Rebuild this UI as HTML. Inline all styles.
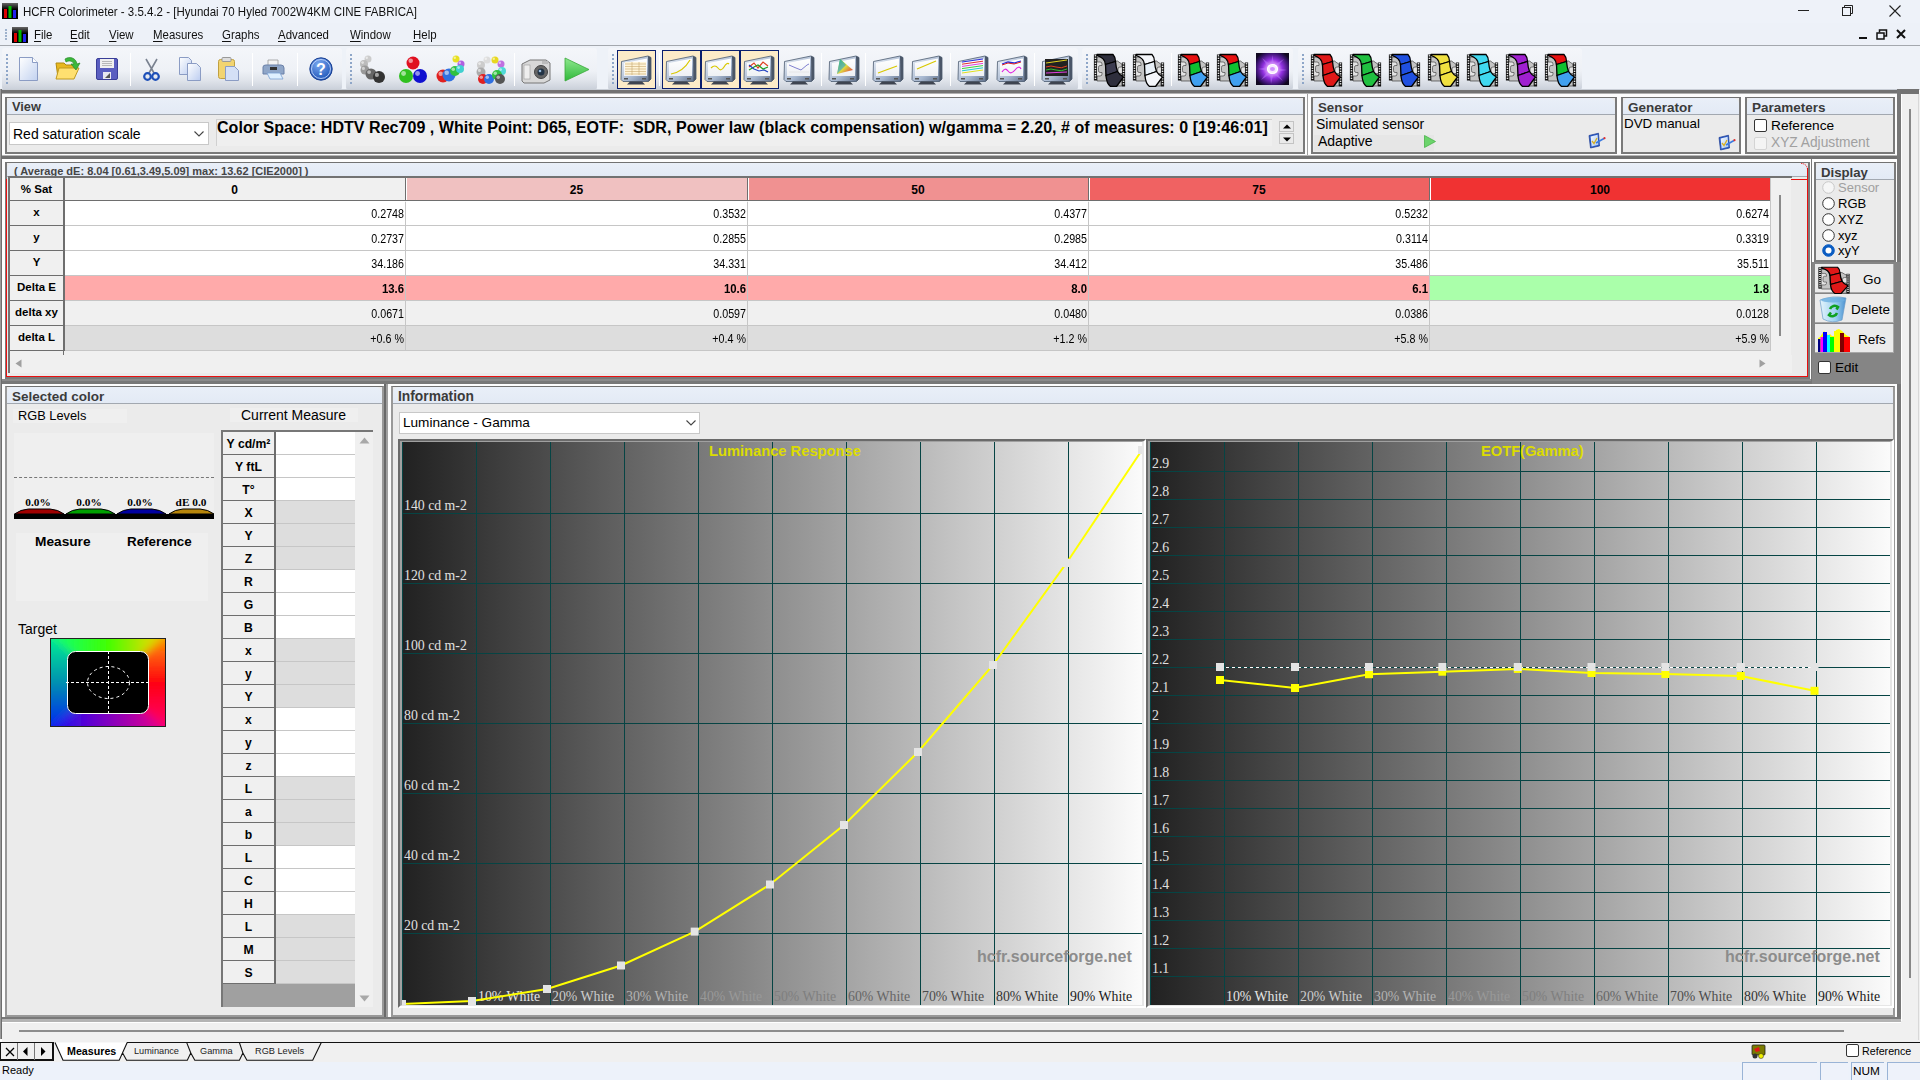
<!DOCTYPE html>
<html><head><meta charset="utf-8"><title>HCFR</title><style>
*{box-sizing:border-box;margin:0;padding:0}
html,body{width:1920px;height:1080px;overflow:hidden;background:#f0f0f0;font-family:"Liberation Sans",sans-serif;font-size:12px;color:#000}
.a{position:absolute}
.t{position:absolute;white-space:nowrap;line-height:1}
.b{font-weight:bold}
.serif{font-family:"Liberation Serif",serif}
.hdr{position:absolute;background:linear-gradient(#eef3fa,#e2e9f4);border-bottom:1px solid #a9b3bf}
.ptitle{position:absolute;font-weight:bold;font-size:12px;color:#3b3b3b;white-space:nowrap;line-height:1}
</style></head><body>
<div class="a" style="left:0;top:0;width:1920px;height:23px;background:#eef2f9"></div>
<svg class="a" style="left:2px;top:3px" width="16" height="16" viewBox="0 0 16 16"><defs><linearGradient id="aib" x1="0" y1="0" x2="0" y2="1"><stop offset="0" stop-color="#666"/><stop offset="0.4" stop-color="#000"/></linearGradient></defs><rect x="0" y="0" width="16" height="16" fill="url(#aib)"/><rect x="2" y="6" width="3" height="9" fill="#d00"/><rect x="6.5" y="3" width="3" height="12" fill="#0b0"/><rect x="11" y="7" width="3" height="8" fill="#22e"/></svg>
<div class="t" style="left:23px;top:5px;font-size:13px;transform:scaleX(0.885);transform-origin:0 0;color:#111">HCFR Colorimeter - 3.5.4.2 - [Hyundai 70 Hyled 7002W4KM CINE FABRICA]</div>
<div class="a" style="left:1798px;top:10px;width:11px;height:1px;background:#222"></div>
<svg class="a" style="left:1842px;top:5px" width="12" height="12"><rect x="0.5" y="2.5" width="8" height="8" fill="none" stroke="#222"/><path d="M2.5 2.5V0.5H10.5V8.5H8.5" fill="none" stroke="#222"/></svg>
<svg class="a" style="left:1889px;top:5px" width="12" height="12"><path d="M0.5 0.5L11.5 11.5M11.5 0.5L0.5 11.5" stroke="#222" stroke-width="1.1"/></svg>
<div class="a" style="left:0;top:23px;width:1920px;height:23px;background:#edf1f8;border-bottom:1px solid #a4a8ae"></div>
<div class="a" style="left:5px;top:29px;width:2px;height:2px;background:#9fb2cc"></div>
<div class="a" style="left:5px;top:32px;width:2px;height:2px;background:#9fb2cc"></div>
<div class="a" style="left:5px;top:35px;width:2px;height:2px;background:#9fb2cc"></div>
<div class="a" style="left:5px;top:38px;width:2px;height:2px;background:#9fb2cc"></div>
<svg class="a" style="left:12px;top:27px" width="16" height="16" viewBox="0 0 16 16"><defs><linearGradient id="aib" x1="0" y1="0" x2="0" y2="1"><stop offset="0" stop-color="#666"/><stop offset="0.4" stop-color="#000"/></linearGradient></defs><rect x="0" y="0" width="16" height="16" fill="url(#aib)"/><rect x="2" y="6" width="3" height="9" fill="#d00"/><rect x="6.5" y="3" width="3" height="12" fill="#0b0"/><rect x="11" y="7" width="3" height="8" fill="#22e"/></svg>
<div class="t" style="left:34px;top:28px;font-size:13px;transform:scaleX(0.88);transform-origin:0 0;color:#111"><u style="text-decoration-thickness:1px;text-underline-offset:2px">F</u>ile</div>
<div class="t" style="left:70px;top:28px;font-size:13px;transform:scaleX(0.88);transform-origin:0 0;color:#111"><u style="text-decoration-thickness:1px;text-underline-offset:2px">E</u>dit</div>
<div class="t" style="left:109px;top:28px;font-size:13px;transform:scaleX(0.88);transform-origin:0 0;color:#111"><u style="text-decoration-thickness:1px;text-underline-offset:2px">V</u>iew</div>
<div class="t" style="left:153px;top:28px;font-size:13px;transform:scaleX(0.88);transform-origin:0 0;color:#111"><u style="text-decoration-thickness:1px;text-underline-offset:2px">M</u>easures</div>
<div class="t" style="left:222px;top:28px;font-size:13px;transform:scaleX(0.88);transform-origin:0 0;color:#111"><u style="text-decoration-thickness:1px;text-underline-offset:2px">G</u>raphs</div>
<div class="t" style="left:278px;top:28px;font-size:13px;transform:scaleX(0.88);transform-origin:0 0;color:#111"><u style="text-decoration-thickness:1px;text-underline-offset:2px">A</u>dvanced</div>
<div class="t" style="left:350px;top:28px;font-size:13px;transform:scaleX(0.88);transform-origin:0 0;color:#111"><u style="text-decoration-thickness:1px;text-underline-offset:2px">W</u>indow</div>
<div class="t" style="left:413px;top:28px;font-size:13px;transform:scaleX(0.88);transform-origin:0 0;color:#111"><u style="text-decoration-thickness:1px;text-underline-offset:2px">H</u>elp</div>
<div class="a" style="left:1859px;top:37px;width:8px;height:2px;background:#111"></div>
<svg class="a" style="left:1876px;top:29px" width="12" height="11"><rect x="1" y="4" width="7" height="6" fill="none" stroke="#111" stroke-width="1.5"/><path d="M3.5 3.5V1H10.5V7H8" fill="none" stroke="#111" stroke-width="1.5"/></svg>
<svg class="a" style="left:1896px;top:29px" width="10" height="10"><path d="M1 1L9 9M9 1L1 9" stroke="#111" stroke-width="2"/></svg>
<div class="a" style="left:0;top:46px;width:1920px;height:44px;background:#eef2f8"></div>
<div class="a" style="left:2px;top:48px;width:340px;height:42px;border-radius:3px;background:linear-gradient(#f4f6fa 0%,#eef1f6 55%,#dfe3ea 78%,#c9cfd9 100%)"></div><div class="a" style="left:6px;top:54px;width:2px;height:2px;background:#8ea6c8"></div><div class="a" style="left:6px;top:58px;width:2px;height:2px;background:#8ea6c8"></div><div class="a" style="left:6px;top:62px;width:2px;height:2px;background:#8ea6c8"></div><div class="a" style="left:6px;top:66px;width:2px;height:2px;background:#8ea6c8"></div><div class="a" style="left:6px;top:70px;width:2px;height:2px;background:#8ea6c8"></div><div class="a" style="left:6px;top:74px;width:2px;height:2px;background:#8ea6c8"></div><div class="a" style="left:6px;top:78px;width:2px;height:2px;background:#8ea6c8"></div><div class="a" style="left:6px;top:82px;width:2px;height:2px;background:#8ea6c8"></div>
<div class="a" style="left:346px;top:48px;width:251px;height:42px;border-radius:3px;background:linear-gradient(#f4f6fa 0%,#eef1f6 55%,#dfe3ea 78%,#c9cfd9 100%)"></div><div class="a" style="left:350px;top:54px;width:2px;height:2px;background:#8ea6c8"></div><div class="a" style="left:350px;top:58px;width:2px;height:2px;background:#8ea6c8"></div><div class="a" style="left:350px;top:62px;width:2px;height:2px;background:#8ea6c8"></div><div class="a" style="left:350px;top:66px;width:2px;height:2px;background:#8ea6c8"></div><div class="a" style="left:350px;top:70px;width:2px;height:2px;background:#8ea6c8"></div><div class="a" style="left:350px;top:74px;width:2px;height:2px;background:#8ea6c8"></div><div class="a" style="left:350px;top:78px;width:2px;height:2px;background:#8ea6c8"></div><div class="a" style="left:350px;top:82px;width:2px;height:2px;background:#8ea6c8"></div>
<div class="a" style="left:608px;top:48px;width:470px;height:42px;border-radius:3px;background:linear-gradient(#f4f6fa 0%,#eef1f6 55%,#dfe3ea 78%,#c9cfd9 100%)"></div><div class="a" style="left:612px;top:54px;width:2px;height:2px;background:#8ea6c8"></div><div class="a" style="left:612px;top:58px;width:2px;height:2px;background:#8ea6c8"></div><div class="a" style="left:612px;top:62px;width:2px;height:2px;background:#8ea6c8"></div><div class="a" style="left:612px;top:66px;width:2px;height:2px;background:#8ea6c8"></div><div class="a" style="left:612px;top:70px;width:2px;height:2px;background:#8ea6c8"></div><div class="a" style="left:612px;top:74px;width:2px;height:2px;background:#8ea6c8"></div><div class="a" style="left:612px;top:78px;width:2px;height:2px;background:#8ea6c8"></div><div class="a" style="left:612px;top:82px;width:2px;height:2px;background:#8ea6c8"></div>
<div class="a" style="left:1082px;top:48px;width:211px;height:42px;border-radius:3px;background:linear-gradient(#f4f6fa 0%,#eef1f6 55%,#dfe3ea 78%,#c9cfd9 100%)"></div><div class="a" style="left:1086px;top:54px;width:2px;height:2px;background:#8ea6c8"></div><div class="a" style="left:1086px;top:58px;width:2px;height:2px;background:#8ea6c8"></div><div class="a" style="left:1086px;top:62px;width:2px;height:2px;background:#8ea6c8"></div><div class="a" style="left:1086px;top:66px;width:2px;height:2px;background:#8ea6c8"></div><div class="a" style="left:1086px;top:70px;width:2px;height:2px;background:#8ea6c8"></div><div class="a" style="left:1086px;top:74px;width:2px;height:2px;background:#8ea6c8"></div><div class="a" style="left:1086px;top:78px;width:2px;height:2px;background:#8ea6c8"></div><div class="a" style="left:1086px;top:82px;width:2px;height:2px;background:#8ea6c8"></div>
<div class="a" style="left:1298px;top:48px;width:284px;height:42px;border-radius:3px;background:linear-gradient(#f4f6fa 0%,#eef1f6 55%,#dfe3ea 78%,#c9cfd9 100%)"></div><div class="a" style="left:1302px;top:54px;width:2px;height:2px;background:#8ea6c8"></div><div class="a" style="left:1302px;top:58px;width:2px;height:2px;background:#8ea6c8"></div><div class="a" style="left:1302px;top:62px;width:2px;height:2px;background:#8ea6c8"></div><div class="a" style="left:1302px;top:66px;width:2px;height:2px;background:#8ea6c8"></div><div class="a" style="left:1302px;top:70px;width:2px;height:2px;background:#8ea6c8"></div><div class="a" style="left:1302px;top:74px;width:2px;height:2px;background:#8ea6c8"></div><div class="a" style="left:1302px;top:78px;width:2px;height:2px;background:#8ea6c8"></div><div class="a" style="left:1302px;top:82px;width:2px;height:2px;background:#8ea6c8"></div>
<svg class="a" style="left:19px;top:57px" width="20" height="24" viewBox="0 0 20 24"><defs><linearGradient id="gnew" x1="0" y1="0" x2="1" y2="1"><stop offset="0" stop-color="#fff"/><stop offset="1" stop-color="#c2d2f0"/></linearGradient></defs><path d="M0.5 0.5H13.5L18.5 5.5V23.5H0.5Z" fill="url(#gnew)" stroke="#8b9cc4"/><path d="M13.5 0.5V5.5H18.5" fill="#fff" stroke="#8b9cc4"/></svg>
<svg class="a" style="left:55px;top:56px" width="26" height="25" viewBox="0 0 26 25"><path d="M1 7H9L11 9H19V22H3Z" fill="#e8b820" stroke="#b08a10"/><path d="M4 12H24L19 23H1Z" fill="#ffe070" stroke="#c09a20"/><path d="M10 3C15 0 21 2 22 8L25 7L21 14L16 8L19 8C18 5 14 4 11 6Z" fill="#3cb83c" stroke="#2a8a2a" stroke-width="0.7"/></svg>
<svg class="a" style="left:96px;top:58px" width="22" height="22" viewBox="0 0 22 22"><rect x="0.5" y="0.5" width="21" height="21" rx="1.5" fill="#5a5ec0" stroke="#3a3e98"/><rect x="4" y="1" width="14" height="9" fill="#f0f0f0"/><path d="M6 3.5H16M6 5.5H16M6 7.5H16" stroke="#aaa" stroke-width="0.8"/><rect x="7" y="14" width="8" height="7" fill="#e8e8f0"/><path d="M9 20L14 15V20Z" fill="#555"/></svg>
<div class="a" style="left:130px;top:53px;width:1px;height:33px;background:#c5cad2;border-right:1px solid #fff"></div>
<svg class="a" style="left:143px;top:58px" width="17" height="23" viewBox="0 0 17 23"><path d="M3 1L11 15M14 1L6 15" stroke="#7a8290" stroke-width="1.6"/><circle cx="4.5" cy="18.5" r="3.3" fill="none" stroke="#1d4fb8" stroke-width="2.2"/><circle cx="12.5" cy="18.5" r="3.3" fill="none" stroke="#1d4fb8" stroke-width="2.2"/></svg>
<svg class="a" style="left:179px;top:57px" width="22" height="24" viewBox="0 0 22 24"><defs><linearGradient id="gcp" x1="0" y1="0" x2="1" y2="1"><stop offset="0" stop-color="#fff"/><stop offset="1" stop-color="#bccdf0"/></linearGradient></defs><path d="M0.5 0.5H9.5L12.5 3.5V17.5H0.5Z" fill="url(#gcp)" stroke="#8b9cc4"/><path d="M8.5 6.5H17.5L21.5 10.5V23.5H8.5Z" fill="url(#gcp)" stroke="#8b9cc4"/></svg>
<svg class="a" style="left:218px;top:57px" width="21" height="24" viewBox="0 0 21 24"><rect x="0.5" y="2.5" width="16" height="19" rx="2" fill="#f2d470" stroke="#c0a040"/><rect x="4" y="0.5" width="9" height="4" rx="1" fill="#ddd" stroke="#999"/><path d="M7.5 9.5H16.5L20.5 13.5V23.5H7.5Z" fill="#d4e0f6" stroke="#8b9cc4"/></svg>
<div class="a" style="left:252px;top:53px;width:1px;height:33px;background:#c5cad2;border-right:1px solid #fff"></div>
<svg class="a" style="left:262px;top:59px" width="23" height="22" viewBox="0 0 23 22"><path d="M6 1H16V7H6Z" fill="#f4f4f4" stroke="#999" stroke-width="0.8"/><path d="M1 8Q1 6 4 6H19Q22 6 22 9V15H1Z" fill="#8fa6c8" stroke="#6a80a8"/><rect x="8" y="8" width="7" height="3" fill="#333"/><path d="M5 14H18L21 20H8Z" fill="#dff0ff" stroke="#7aa0d0" stroke-width="0.8"/></svg>
<div class="a" style="left:297px;top:53px;width:1px;height:33px;background:#c5cad2;border-right:1px solid #fff"></div>
<svg class="a" style="left:309px;top:57px" width="24" height="24" viewBox="0 0 24 24"><defs><radialGradient id="ghl" cx="0.4" cy="0.3" r="0.7"><stop offset="0" stop-color="#7aa8f0"/><stop offset="1" stop-color="#1f55b8"/></radialGradient></defs><circle cx="12" cy="12" r="11.2" fill="url(#ghl)" stroke="#1a3f90" stroke-width="1"/><circle cx="12" cy="12" r="9.5" fill="none" stroke="#cfe0ff" stroke-width="0.8"/><text x="12" y="18" text-anchor="middle" font-family="Liberation Sans" font-weight="bold" font-size="16" fill="#fff">?</text></svg>
<svg class="a" style="left:358px;top:55px" width="30" height="30" viewBox="0 0 30 30"><circle cx="10" cy="4" r="3.5" fill="#ccc"/><circle cx="8.775" cy="2.7750000000000004" r="1.2249999999999999" fill="#fff" opacity="0.55"/><circle cx="6" cy="9" r="4" fill="#bbb"/><circle cx="4.6" cy="7.6" r="1.4" fill="#fff" opacity="0.55"/><circle cx="7" cy="15" r="4.5" fill="#999"/><circle cx="5.425" cy="13.425" r="1.575" fill="#fff" opacity="0.55"/><circle cx="13" cy="19" r="5.5" fill="#666"/><circle cx="11.075" cy="17.075" r="1.9249999999999998" fill="#fff" opacity="0.55"/><circle cx="21" cy="22" r="6" fill="#333"/><circle cx="18.9" cy="19.9" r="2.0999999999999996" fill="#fff" opacity="0.55"/></svg>
<svg class="a" style="left:398px;top:55px" width="30" height="30" viewBox="0 0 30 30"><circle cx="15" cy="8" r="6.5" fill="#e01020"/><circle cx="12.725" cy="5.725" r="2.275" fill="#fff" opacity="0.55"/><circle cx="8" cy="21" r="7" fill="#30c020"/><circle cx="5.550000000000001" cy="18.55" r="2.4499999999999997" fill="#fff" opacity="0.55"/><circle cx="22" cy="21" r="7" fill="#1010d0"/><circle cx="19.55" cy="18.55" r="2.4499999999999997" fill="#fff" opacity="0.55"/></svg>
<svg class="a" style="left:436px;top:55px" width="31" height="30" viewBox="0 0 31 30"><circle cx="20" cy="4" r="3.5" fill="#e8e020"/><circle cx="18.775" cy="2.7750000000000004" r="1.2249999999999999" fill="#fff" opacity="0.55"/><circle cx="25" cy="9" r="3.5" fill="#b060e0"/><circle cx="23.775" cy="7.775" r="1.2249999999999999" fill="#fff" opacity="0.55"/><circle cx="7" cy="21" r="6.5" fill="#e02020"/><circle cx="4.725" cy="18.725" r="2.275" fill="#fff" opacity="0.55"/><circle cx="13" cy="20" r="6.5" fill="#3070e0"/><circle cx="10.725" cy="17.725" r="2.275" fill="#fff" opacity="0.55"/><circle cx="19" cy="16" r="5" fill="#30c040"/><circle cx="17.25" cy="14.25" r="1.75" fill="#fff" opacity="0.55"/><circle cx="24" cy="14" r="4" fill="#40d0d0"/><circle cx="22.6" cy="12.6" r="1.4" fill="#fff" opacity="0.55"/></svg>
<svg class="a" style="left:475px;top:55px" width="32" height="30" viewBox="0 0 32 30"><circle cx="12" cy="5" r="3.5" fill="#ddd"/><circle cx="10.775" cy="3.7750000000000004" r="1.2249999999999999" fill="#fff" opacity="0.55"/><circle cx="20" cy="5" r="3.5" fill="#e8d820"/><circle cx="18.775" cy="3.7750000000000004" r="1.2249999999999999" fill="#fff" opacity="0.55"/><circle cx="26" cy="9" r="3.5" fill="#c070e0"/><circle cx="24.775" cy="7.775" r="1.2249999999999999" fill="#fff" opacity="0.55"/><circle cx="6" cy="10" r="4" fill="#ccc"/><circle cx="4.6" cy="8.6" r="1.4" fill="#fff" opacity="0.55"/><circle cx="6" cy="17" r="4.5" fill="#aaa"/><circle cx="4.425" cy="15.425" r="1.575" fill="#fff" opacity="0.55"/><circle cx="27" cy="16" r="4" fill="#50d8d8"/><circle cx="25.6" cy="14.6" r="1.4" fill="#fff" opacity="0.55"/><circle cx="8" cy="24" r="5" fill="#e02020"/><circle cx="6.25" cy="22.25" r="1.75" fill="#fff" opacity="0.55"/><circle cx="14" cy="24" r="5" fill="#3070e0"/><circle cx="12.25" cy="22.25" r="1.75" fill="#fff" opacity="0.55"/><circle cx="22" cy="20" r="5" fill="#30c040"/><circle cx="20.25" cy="18.25" r="1.75" fill="#fff" opacity="0.55"/><circle cx="25" cy="24" r="5" fill="#555"/><circle cx="23.25" cy="22.25" r="1.75" fill="#fff" opacity="0.55"/></svg>
<div class="a" style="left:514px;top:53px;width:1px;height:33px;background:#c5cad2;border-right:1px solid #fff"></div>
<svg class="a" style="left:520px;top:56px" width="32" height="28" viewBox="0 0 32 28"><path d="M2 8L10 4H26L30 7V24L24 27H4L2 25Z" fill="#d8d8d8" stroke="#777"/><rect x="4" y="9" width="6" height="14" fill="#eee" stroke="#999" stroke-width="0.6"/><circle cx="21" cy="16" r="6.5" fill="#666" stroke="#444"/><circle cx="21" cy="16" r="3.5" fill="#234"/><circle cx="20" cy="15" r="1.3" fill="#9bd"/><rect x="22" y="5" width="6" height="3" fill="#bbb"/></svg>
<svg class="a" style="left:564px;top:57px" width="26" height="25" viewBox="0 0 26 25"><defs><linearGradient id="gpl" x1="0" y1="0" x2="0" y2="1"><stop offset="0" stop-color="#8ee88e"/><stop offset="1" stop-color="#2fb83a"/></linearGradient></defs><path d="M1 1L25 12.5L1 24Z" fill="url(#gpl)" stroke="#3aa83a" stroke-width="0.8"/></svg>
<div class="a" style="left:617px;top:50px;width:39px;height:39px;background:#fcebc8;border:1px solid #0a1f6e"></div><svg class="a" style="left:620px;top:53px" width="32" height="32" viewBox="0 0 32 32"><defs><linearGradient id="gmb" x1="0" y1="0" x2="1" y2="1"><stop offset="0" stop-color="#eef3fa"/><stop offset="0.6" stop-color="#a8b8d0"/><stop offset="1" stop-color="#5a6a84"/></linearGradient><linearGradient id="gms" x1="0" y1="0" x2="0" y2="1"><stop offset="0" stop-color="#ffffff"/><stop offset="1" stop-color="#eef0f4"/></linearGradient></defs><path d="M1.5 8.5L28 3L31 4.5V26L28.5 28.5H3L1 26.5Z" fill="url(#gmb)" stroke="#4a5a70" stroke-width="0.8"/><path d="M28 3L31 4.5V26L28.5 28.5Z" fill="#4a5668"/><path d="M4 10L27 5.5V23H4Z" fill="url(#gms)"/><rect x="5" y="9" width="21" height="13" fill="#fff4d8"/><path d="M5 11.0H26" stroke="#c8a870" stroke-width="0.6"/><path d="M5 13.5H26" stroke="#c8a870" stroke-width="0.6"/><path d="M5 16.0H26" stroke="#c8a870" stroke-width="0.6"/><path d="M5 18.5H26" stroke="#c8a870" stroke-width="0.6"/><path d="M5 21.0H26" stroke="#c8a870" stroke-width="0.6"/><path d="M12 9V22M19 9V22" stroke="#c8a870" stroke-width="0.6"/><rect x="4" y="25" width="4" height="1.5" fill="#555"/><rect x="22" y="25" width="4" height="1.5" fill="#555"/><path d="M10 28.5H22L25 31.5H7Z" fill="#3e4450"/></svg>
<div class="a" style="left:659px;top:53px;width:1px;height:33px;background:#c5cad2;border-right:1px solid #fff"></div>
<div class="a" style="left:662px;top:50px;width:39px;height:39px;background:#fcebc8;border:1px solid #0a1f6e"></div><svg class="a" style="left:665px;top:53px" width="32" height="32" viewBox="0 0 32 32"><defs><linearGradient id="gmb" x1="0" y1="0" x2="1" y2="1"><stop offset="0" stop-color="#eef3fa"/><stop offset="0.6" stop-color="#a8b8d0"/><stop offset="1" stop-color="#5a6a84"/></linearGradient><linearGradient id="gms" x1="0" y1="0" x2="0" y2="1"><stop offset="0" stop-color="#ffffff"/><stop offset="1" stop-color="#eef0f4"/></linearGradient></defs><path d="M1.5 8.5L28 3L31 4.5V26L28.5 28.5H3L1 26.5Z" fill="url(#gmb)" stroke="#4a5a70" stroke-width="0.8"/><path d="M28 3L31 4.5V26L28.5 28.5Z" fill="#4a5668"/><path d="M4 10L27 5.5V23H4Z" fill="url(#gms)"/><path d="M6 21Q18 19 25 7" fill="none" stroke="#d8c800" stroke-width="1.2"/><rect x="4" y="25" width="4" height="1.5" fill="#555"/><rect x="22" y="25" width="4" height="1.5" fill="#555"/><path d="M10 28.5H22L25 31.5H7Z" fill="#3e4450"/></svg>
<div class="a" style="left:701px;top:50px;width:39px;height:39px;background:#fcebc8;border:1px solid #0a1f6e"></div><svg class="a" style="left:704px;top:53px" width="32" height="32" viewBox="0 0 32 32"><defs><linearGradient id="gmb" x1="0" y1="0" x2="1" y2="1"><stop offset="0" stop-color="#eef3fa"/><stop offset="0.6" stop-color="#a8b8d0"/><stop offset="1" stop-color="#5a6a84"/></linearGradient><linearGradient id="gms" x1="0" y1="0" x2="0" y2="1"><stop offset="0" stop-color="#ffffff"/><stop offset="1" stop-color="#eef0f4"/></linearGradient></defs><path d="M1.5 8.5L28 3L31 4.5V26L28.5 28.5H3L1 26.5Z" fill="url(#gmb)" stroke="#4a5a70" stroke-width="0.8"/><path d="M28 3L31 4.5V26L28.5 28.5Z" fill="#4a5668"/><path d="M4 10L27 5.5V23H4Z" fill="url(#gms)"/><path d="M7 15Q11 11 14 15T20 14T25 11" fill="none" stroke="#d8c800" stroke-width="1.2"/><rect x="4" y="25" width="4" height="1.5" fill="#555"/><rect x="22" y="25" width="4" height="1.5" fill="#555"/><path d="M10 28.5H22L25 31.5H7Z" fill="#3e4450"/></svg>
<div class="a" style="left:740px;top:50px;width:39px;height:39px;background:#fcebc8;border:1px solid #0a1f6e"></div><svg class="a" style="left:743px;top:53px" width="32" height="32" viewBox="0 0 32 32"><defs><linearGradient id="gmb" x1="0" y1="0" x2="1" y2="1"><stop offset="0" stop-color="#eef3fa"/><stop offset="0.6" stop-color="#a8b8d0"/><stop offset="1" stop-color="#5a6a84"/></linearGradient><linearGradient id="gms" x1="0" y1="0" x2="0" y2="1"><stop offset="0" stop-color="#ffffff"/><stop offset="1" stop-color="#eef0f4"/></linearGradient></defs><path d="M1.5 8.5L28 3L31 4.5V26L28.5 28.5H3L1 26.5Z" fill="url(#gmb)" stroke="#4a5a70" stroke-width="0.8"/><path d="M28 3L31 4.5V26L28.5 28.5Z" fill="#4a5668"/><path d="M4 10L27 5.5V23H4Z" fill="url(#gms)"/><path d="M6 14L11 10L15 15L20 9L25 13" fill="none" stroke="#e04020" stroke-width="1.2"/><path d="M6 17L11 14L15 12L20 16L25 14" fill="none" stroke="#20a020" stroke-width="1.2"/><path d="M6 12L11 16L16 18L21 17L25 19" fill="none" stroke="#2040c0" stroke-width="1.2"/><rect x="4" y="25" width="4" height="1.5" fill="#555"/><rect x="22" y="25" width="4" height="1.5" fill="#555"/><path d="M10 28.5H22L25 31.5H7Z" fill="#3e4450"/></svg>
<svg class="a" style="left:783px;top:53px" width="32" height="32" viewBox="0 0 32 32"><defs><linearGradient id="gmb" x1="0" y1="0" x2="1" y2="1"><stop offset="0" stop-color="#eef3fa"/><stop offset="0.6" stop-color="#a8b8d0"/><stop offset="1" stop-color="#5a6a84"/></linearGradient><linearGradient id="gms" x1="0" y1="0" x2="0" y2="1"><stop offset="0" stop-color="#ffffff"/><stop offset="1" stop-color="#eef0f4"/></linearGradient></defs><path d="M1.5 8.5L28 3L31 4.5V26L28.5 28.5H3L1 26.5Z" fill="url(#gmb)" stroke="#4a5a70" stroke-width="0.8"/><path d="M28 3L31 4.5V26L28.5 28.5Z" fill="#4a5668"/><path d="M4 10L27 5.5V23H4Z" fill="url(#gms)"/><path d="M6 12L13 15L18 17L24 12L26 11" fill="none" stroke="#8080d0" stroke-width="1"/><path d="M6 19H26" stroke="#ddd" stroke-width="0.6"/><rect x="4" y="25" width="4" height="1.5" fill="#555"/><rect x="22" y="25" width="4" height="1.5" fill="#555"/><path d="M10 28.5H22L25 31.5H7Z" fill="#3e4450"/></svg>
<div class="a" style="left:821px;top:53px;width:1px;height:33px;background:#c5cad2;border-right:1px solid #fff"></div>
<svg class="a" style="left:828px;top:53px" width="32" height="32" viewBox="0 0 32 32"><defs><linearGradient id="gmb" x1="0" y1="0" x2="1" y2="1"><stop offset="0" stop-color="#eef3fa"/><stop offset="0.6" stop-color="#a8b8d0"/><stop offset="1" stop-color="#5a6a84"/></linearGradient><linearGradient id="gms" x1="0" y1="0" x2="0" y2="1"><stop offset="0" stop-color="#ffffff"/><stop offset="1" stop-color="#eef0f4"/></linearGradient></defs><path d="M1.5 8.5L28 3L31 4.5V26L28.5 28.5H3L1 26.5Z" fill="url(#gmb)" stroke="#4a5a70" stroke-width="0.8"/><path d="M28 3L31 4.5V26L28.5 28.5Z" fill="#4a5668"/><path d="M4 10L27 5.5V23H4Z" fill="url(#gms)"/><defs><linearGradient id="gcie" x1="0" y1="0" x2="1" y2="1"><stop offset="0" stop-color="#20c020"/><stop offset="0.5" stop-color="#e0e040"/><stop offset="1" stop-color="#e02040"/></linearGradient></defs><path d="M9 21L12 6L25 17Z" fill="url(#gcie)"/><path d="M9 21L12 6L18 12Z" fill="#30a0e0" opacity="0.6"/><rect x="4" y="25" width="4" height="1.5" fill="#555"/><rect x="22" y="25" width="4" height="1.5" fill="#555"/><path d="M10 28.5H22L25 31.5H7Z" fill="#3e4450"/></svg>
<div class="a" style="left:865px;top:53px;width:1px;height:33px;background:#c5cad2;border-right:1px solid #fff"></div>
<svg class="a" style="left:872px;top:53px" width="32" height="32" viewBox="0 0 32 32"><defs><linearGradient id="gmb" x1="0" y1="0" x2="1" y2="1"><stop offset="0" stop-color="#eef3fa"/><stop offset="0.6" stop-color="#a8b8d0"/><stop offset="1" stop-color="#5a6a84"/></linearGradient><linearGradient id="gms" x1="0" y1="0" x2="0" y2="1"><stop offset="0" stop-color="#ffffff"/><stop offset="1" stop-color="#eef0f4"/></linearGradient></defs><path d="M1.5 8.5L28 3L31 4.5V26L28.5 28.5H3L1 26.5Z" fill="url(#gmb)" stroke="#4a5a70" stroke-width="0.8"/><path d="M28 3L31 4.5V26L28.5 28.5Z" fill="#4a5668"/><path d="M4 10L27 5.5V23H4Z" fill="url(#gms)"/><path d="M6 20L25 13" stroke="#d8c800" stroke-width="1.3"/><rect x="4" y="25" width="4" height="1.5" fill="#555"/><rect x="22" y="25" width="4" height="1.5" fill="#555"/><path d="M10 28.5H22L25 31.5H7Z" fill="#3e4450"/></svg>
<svg class="a" style="left:911px;top:53px" width="32" height="32" viewBox="0 0 32 32"><defs><linearGradient id="gmb" x1="0" y1="0" x2="1" y2="1"><stop offset="0" stop-color="#eef3fa"/><stop offset="0.6" stop-color="#a8b8d0"/><stop offset="1" stop-color="#5a6a84"/></linearGradient><linearGradient id="gms" x1="0" y1="0" x2="0" y2="1"><stop offset="0" stop-color="#ffffff"/><stop offset="1" stop-color="#eef0f4"/></linearGradient></defs><path d="M1.5 8.5L28 3L31 4.5V26L28.5 28.5H3L1 26.5Z" fill="url(#gmb)" stroke="#4a5a70" stroke-width="0.8"/><path d="M28 3L31 4.5V26L28.5 28.5Z" fill="#4a5668"/><path d="M4 10L27 5.5V23H4Z" fill="url(#gms)"/><path d="M6 16L25 8" stroke="#d8c800" stroke-width="1.3"/><rect x="4" y="25" width="4" height="1.5" fill="#555"/><rect x="22" y="25" width="4" height="1.5" fill="#555"/><path d="M10 28.5H22L25 31.5H7Z" fill="#3e4450"/></svg>
<div class="a" style="left:950px;top:53px;width:1px;height:33px;background:#c5cad2;border-right:1px solid #fff"></div>
<svg class="a" style="left:957px;top:53px" width="32" height="32" viewBox="0 0 32 32"><defs><linearGradient id="gmb" x1="0" y1="0" x2="1" y2="1"><stop offset="0" stop-color="#eef3fa"/><stop offset="0.6" stop-color="#a8b8d0"/><stop offset="1" stop-color="#5a6a84"/></linearGradient><linearGradient id="gms" x1="0" y1="0" x2="0" y2="1"><stop offset="0" stop-color="#ffffff"/><stop offset="1" stop-color="#eef0f4"/></linearGradient></defs><path d="M1.5 8.5L28 3L31 4.5V26L28.5 28.5H3L1 26.5Z" fill="url(#gmb)" stroke="#4a5a70" stroke-width="0.8"/><path d="M28 3L31 4.5V26L28.5 28.5Z" fill="#4a5668"/><path d="M4 10L27 5.5V23H4Z" fill="url(#gms)"/><path d="M5 20.0L26 17.0" stroke="#e0e020" stroke-width="1"/><path d="M5 17.8L26 14.8" stroke="#20d0d0" stroke-width="1"/><path d="M5 15.6L26 12.6" stroke="#40d040" stroke-width="1"/><path d="M5 13.399999999999999L26 10.399999999999999" stroke="#e040e0" stroke-width="1"/><path d="M5 11.2L26 8.2" stroke="#e03030" stroke-width="1"/><path d="M5 9.0L26 6.0" stroke="#3030e0" stroke-width="1"/><rect x="4" y="25" width="4" height="1.5" fill="#555"/><rect x="22" y="25" width="4" height="1.5" fill="#555"/><path d="M10 28.5H22L25 31.5H7Z" fill="#3e4450"/></svg>
<svg class="a" style="left:996px;top:53px" width="32" height="32" viewBox="0 0 32 32"><defs><linearGradient id="gmb" x1="0" y1="0" x2="1" y2="1"><stop offset="0" stop-color="#eef3fa"/><stop offset="0.6" stop-color="#a8b8d0"/><stop offset="1" stop-color="#5a6a84"/></linearGradient><linearGradient id="gms" x1="0" y1="0" x2="0" y2="1"><stop offset="0" stop-color="#ffffff"/><stop offset="1" stop-color="#eef0f4"/></linearGradient></defs><path d="M1.5 8.5L28 3L31 4.5V26L28.5 28.5H3L1 26.5Z" fill="url(#gmb)" stroke="#4a5a70" stroke-width="0.8"/><path d="M28 3L31 4.5V26L28.5 28.5Z" fill="#4a5668"/><path d="M4 10L27 5.5V23H4Z" fill="url(#gms)"/><path d="M6 11L12 9L18 10L25 8" stroke="#2030e0" stroke-width="1.3" fill="none"/><path d="M6 12L12 10L18 11L25 9" stroke="#e02020" stroke-width="1" fill="none"/><path d="M6 19Q9 14 12 18T19 17T25 16" stroke="#e020e0" stroke-width="1.2" fill="none"/><rect x="4" y="25" width="4" height="1.5" fill="#555"/><rect x="22" y="25" width="4" height="1.5" fill="#555"/><path d="M10 28.5H22L25 31.5H7Z" fill="#3e4450"/></svg>
<div class="a" style="left:1034px;top:53px;width:1px;height:33px;background:#c5cad2;border-right:1px solid #fff"></div>
<svg class="a" style="left:1041px;top:53px" width="32" height="32" viewBox="0 0 32 32"><defs><linearGradient id="gmb" x1="0" y1="0" x2="1" y2="1"><stop offset="0" stop-color="#eef3fa"/><stop offset="0.6" stop-color="#a8b8d0"/><stop offset="1" stop-color="#5a6a84"/></linearGradient><linearGradient id="gms" x1="0" y1="0" x2="0" y2="1"><stop offset="0" stop-color="#ffffff"/><stop offset="1" stop-color="#eef0f4"/></linearGradient></defs><path d="M1.5 8.5L28 3L31 4.5V26L28.5 28.5H3L1 26.5Z" fill="url(#gmb)" stroke="#4a5a70" stroke-width="0.8"/><path d="M28 3L31 4.5V26L28.5 28.5Z" fill="#4a5668"/><path d="M4 10L27 5.5V23H4Z" fill="url(#gms)"/><rect x="4" y="6" width="23" height="17" fill="#222"/><path d="M5 10L26 7" stroke="#e0d020" stroke-width="1"/><path d="M5 14Q10 12 15 14T26 13" stroke="#e04020" stroke-width="1" fill="none"/><path d="M5 17Q10 15 15 17T26 16" stroke="#30c030" stroke-width="1" fill="none"/><path d="M5 20L26 19" stroke="#e040e0" stroke-width="1"/><rect x="4" y="25" width="4" height="1.5" fill="#555"/><rect x="22" y="25" width="4" height="1.5" fill="#555"/><path d="M10 28.5H22L25 31.5H7Z" fill="#3e4450"/></svg>
<svg class="a" style="left:1093px;top:53px" width="33" height="34" viewBox="0 0 32 34"><rect x="0.4" y="1.5" width="3.2" height="26" fill="#111"/><rect x="1.2" y="2.2" width="1.6" height="1.2" fill="#fff"/><rect x="1.2" y="4.7" width="1.6" height="1.2" fill="#fff"/><rect x="1.2" y="7.2" width="1.6" height="1.2" fill="#fff"/><rect x="1.2" y="9.7" width="1.6" height="1.2" fill="#fff"/><rect x="1.2" y="12.2" width="1.6" height="1.2" fill="#fff"/><rect x="1.2" y="14.7" width="1.6" height="1.2" fill="#fff"/><rect x="1.2" y="17.2" width="1.6" height="1.2" fill="#fff"/><rect x="1.2" y="19.7" width="1.6" height="1.2" fill="#fff"/><rect x="1.2" y="22.2" width="1.6" height="1.2" fill="#fff"/><rect x="1.2" y="24.7" width="1.6" height="1.2" fill="#fff"/><rect x="28.4" y="9.5" width="3.2" height="24" fill="#111"/><rect x="29.2" y="10.2" width="1.6" height="1.2" fill="#fff"/><rect x="29.2" y="12.7" width="1.6" height="1.2" fill="#fff"/><rect x="29.2" y="15.2" width="1.6" height="1.2" fill="#fff"/><rect x="29.2" y="17.7" width="1.6" height="1.2" fill="#fff"/><rect x="29.2" y="20.2" width="1.6" height="1.2" fill="#fff"/><rect x="29.2" y="22.7" width="1.6" height="1.2" fill="#fff"/><rect x="29.2" y="25.2" width="1.6" height="1.2" fill="#fff"/><rect x="29.2" y="27.7" width="1.6" height="1.2" fill="#fff"/><rect x="29.2" y="30.2" width="1.6" height="1.2" fill="#fff"/><path d="M3.6 4H8Q11.5 6.5 12 13L12.3 22Q12.8 26.5 14.5 28H3.6Z" fill="#c4c4c4" stroke="#222" stroke-width="0.6"/><path d="M3.6 9H6.5Q8.5 9 8.5 11V12.5H6.5Q5 12.5 5 14.5V17.5Q5 19.5 6.5 19.5H8.5V21Q8.5 23 6.5 23H3.6" fill="#e4e4e4" stroke="#333" stroke-width="0.6"/><path d="M20.5 8H24Q26.5 10 28.4 11V33H22Q26 28.5 27 24.5Q23 20 21 14Z" fill="#c4c4c4" stroke="#222" stroke-width="0.6"/><path d="M28.4 14H26.5Q24.5 14 24.5 16V18.5Q24.5 20.5 26.5 20.5H28.4" fill="#e4e4e4" stroke="#333" stroke-width="0.6"/><path d="M3.5 1.5H19.5Q22 4 22 8.5L12 11.5Q11.5 5 3.5 2.5Z" fill="#2e2e3c" stroke="#000" stroke-width="1.3" stroke-linejoin="round"/><path d="M12 11.5L22 8.5Q22.5 14.5 24 18.5L12.5 22.5Z" fill="#3c3c50" stroke="#000" stroke-width="1.3" stroke-linejoin="round"/><path d="M12.5 22.5L24 18.5Q26 22 30 24L23 33.5H17Q13 30.5 12.5 22.5Z" fill="#2e2e3c" stroke="#000" stroke-width="1.3" stroke-linejoin="round"/></svg>
<svg class="a" style="left:1132px;top:53px" width="33" height="34" viewBox="0 0 32 34"><rect x="0.4" y="1.5" width="3.2" height="26" fill="#111"/><rect x="1.2" y="2.2" width="1.6" height="1.2" fill="#fff"/><rect x="1.2" y="4.7" width="1.6" height="1.2" fill="#fff"/><rect x="1.2" y="7.2" width="1.6" height="1.2" fill="#fff"/><rect x="1.2" y="9.7" width="1.6" height="1.2" fill="#fff"/><rect x="1.2" y="12.2" width="1.6" height="1.2" fill="#fff"/><rect x="1.2" y="14.7" width="1.6" height="1.2" fill="#fff"/><rect x="1.2" y="17.2" width="1.6" height="1.2" fill="#fff"/><rect x="1.2" y="19.7" width="1.6" height="1.2" fill="#fff"/><rect x="1.2" y="22.2" width="1.6" height="1.2" fill="#fff"/><rect x="1.2" y="24.7" width="1.6" height="1.2" fill="#fff"/><rect x="28.4" y="9.5" width="3.2" height="24" fill="#111"/><rect x="29.2" y="10.2" width="1.6" height="1.2" fill="#fff"/><rect x="29.2" y="12.7" width="1.6" height="1.2" fill="#fff"/><rect x="29.2" y="15.2" width="1.6" height="1.2" fill="#fff"/><rect x="29.2" y="17.7" width="1.6" height="1.2" fill="#fff"/><rect x="29.2" y="20.2" width="1.6" height="1.2" fill="#fff"/><rect x="29.2" y="22.7" width="1.6" height="1.2" fill="#fff"/><rect x="29.2" y="25.2" width="1.6" height="1.2" fill="#fff"/><rect x="29.2" y="27.7" width="1.6" height="1.2" fill="#fff"/><rect x="29.2" y="30.2" width="1.6" height="1.2" fill="#fff"/><path d="M3.6 4H8Q11.5 6.5 12 13L12.3 22Q12.8 26.5 14.5 28H3.6Z" fill="#c4c4c4" stroke="#222" stroke-width="0.6"/><path d="M3.6 9H6.5Q8.5 9 8.5 11V12.5H6.5Q5 12.5 5 14.5V17.5Q5 19.5 6.5 19.5H8.5V21Q8.5 23 6.5 23H3.6" fill="#e4e4e4" stroke="#333" stroke-width="0.6"/><path d="M20.5 8H24Q26.5 10 28.4 11V33H22Q26 28.5 27 24.5Q23 20 21 14Z" fill="#c4c4c4" stroke="#222" stroke-width="0.6"/><path d="M28.4 14H26.5Q24.5 14 24.5 16V18.5Q24.5 20.5 26.5 20.5H28.4" fill="#e4e4e4" stroke="#333" stroke-width="0.6"/><path d="M3.5 1.5H19.5Q22 4 22 8.5L12 11.5Q11.5 5 3.5 2.5Z" fill="#f4f6fa" stroke="#000" stroke-width="1.3" stroke-linejoin="round"/><path d="M12 11.5L22 8.5Q22.5 14.5 24 18.5L12.5 22.5Z" fill="#e8f0f8" stroke="#000" stroke-width="1.3" stroke-linejoin="round"/><path d="M12.5 22.5L24 18.5Q26 22 30 24L23 33.5H17Q13 30.5 12.5 22.5Z" fill="#f4f6fa" stroke="#000" stroke-width="1.3" stroke-linejoin="round"/></svg>
<div class="a" style="left:1171px;top:53px;width:1px;height:33px;background:#c5cad2;border-right:1px solid #fff"></div>
<svg class="a" style="left:1177px;top:53px" width="33" height="34" viewBox="0 0 32 34"><rect x="0.4" y="1.5" width="3.2" height="26" fill="#111"/><rect x="1.2" y="2.2" width="1.6" height="1.2" fill="#fff"/><rect x="1.2" y="4.7" width="1.6" height="1.2" fill="#fff"/><rect x="1.2" y="7.2" width="1.6" height="1.2" fill="#fff"/><rect x="1.2" y="9.7" width="1.6" height="1.2" fill="#fff"/><rect x="1.2" y="12.2" width="1.6" height="1.2" fill="#fff"/><rect x="1.2" y="14.7" width="1.6" height="1.2" fill="#fff"/><rect x="1.2" y="17.2" width="1.6" height="1.2" fill="#fff"/><rect x="1.2" y="19.7" width="1.6" height="1.2" fill="#fff"/><rect x="1.2" y="22.2" width="1.6" height="1.2" fill="#fff"/><rect x="1.2" y="24.7" width="1.6" height="1.2" fill="#fff"/><rect x="28.4" y="9.5" width="3.2" height="24" fill="#111"/><rect x="29.2" y="10.2" width="1.6" height="1.2" fill="#fff"/><rect x="29.2" y="12.7" width="1.6" height="1.2" fill="#fff"/><rect x="29.2" y="15.2" width="1.6" height="1.2" fill="#fff"/><rect x="29.2" y="17.7" width="1.6" height="1.2" fill="#fff"/><rect x="29.2" y="20.2" width="1.6" height="1.2" fill="#fff"/><rect x="29.2" y="22.7" width="1.6" height="1.2" fill="#fff"/><rect x="29.2" y="25.2" width="1.6" height="1.2" fill="#fff"/><rect x="29.2" y="27.7" width="1.6" height="1.2" fill="#fff"/><rect x="29.2" y="30.2" width="1.6" height="1.2" fill="#fff"/><path d="M3.6 4H8Q11.5 6.5 12 13L12.3 22Q12.8 26.5 14.5 28H3.6Z" fill="#c4c4c4" stroke="#222" stroke-width="0.6"/><path d="M3.6 9H6.5Q8.5 9 8.5 11V12.5H6.5Q5 12.5 5 14.5V17.5Q5 19.5 6.5 19.5H8.5V21Q8.5 23 6.5 23H3.6" fill="#e4e4e4" stroke="#333" stroke-width="0.6"/><path d="M20.5 8H24Q26.5 10 28.4 11V33H22Q26 28.5 27 24.5Q23 20 21 14Z" fill="#c4c4c4" stroke="#222" stroke-width="0.6"/><path d="M28.4 14H26.5Q24.5 14 24.5 16V18.5Q24.5 20.5 26.5 20.5H28.4" fill="#e4e4e4" stroke="#333" stroke-width="0.6"/><path d="M3.5 1.5H19.5Q22 4 22 8.5L12 11.5Q11.5 5 3.5 2.5Z" fill="#e81010" stroke="#000" stroke-width="1.3" stroke-linejoin="round"/><path d="M12 11.5L22 8.5Q22.5 14.5 24 18.5L12.5 22.5Z" fill="#10c030" stroke="#000" stroke-width="1.3" stroke-linejoin="round"/><path d="M12.5 22.5L24 18.5Q26 22 30 24L23 33.5H17Q13 30.5 12.5 22.5Z" fill="#40a0f0" stroke="#000" stroke-width="1.3" stroke-linejoin="round"/></svg>
<svg class="a" style="left:1216px;top:53px" width="33" height="34" viewBox="0 0 32 34"><rect x="0.4" y="1.5" width="3.2" height="26" fill="#111"/><rect x="1.2" y="2.2" width="1.6" height="1.2" fill="#fff"/><rect x="1.2" y="4.7" width="1.6" height="1.2" fill="#fff"/><rect x="1.2" y="7.2" width="1.6" height="1.2" fill="#fff"/><rect x="1.2" y="9.7" width="1.6" height="1.2" fill="#fff"/><rect x="1.2" y="12.2" width="1.6" height="1.2" fill="#fff"/><rect x="1.2" y="14.7" width="1.6" height="1.2" fill="#fff"/><rect x="1.2" y="17.2" width="1.6" height="1.2" fill="#fff"/><rect x="1.2" y="19.7" width="1.6" height="1.2" fill="#fff"/><rect x="1.2" y="22.2" width="1.6" height="1.2" fill="#fff"/><rect x="1.2" y="24.7" width="1.6" height="1.2" fill="#fff"/><rect x="28.4" y="9.5" width="3.2" height="24" fill="#111"/><rect x="29.2" y="10.2" width="1.6" height="1.2" fill="#fff"/><rect x="29.2" y="12.7" width="1.6" height="1.2" fill="#fff"/><rect x="29.2" y="15.2" width="1.6" height="1.2" fill="#fff"/><rect x="29.2" y="17.7" width="1.6" height="1.2" fill="#fff"/><rect x="29.2" y="20.2" width="1.6" height="1.2" fill="#fff"/><rect x="29.2" y="22.7" width="1.6" height="1.2" fill="#fff"/><rect x="29.2" y="25.2" width="1.6" height="1.2" fill="#fff"/><rect x="29.2" y="27.7" width="1.6" height="1.2" fill="#fff"/><rect x="29.2" y="30.2" width="1.6" height="1.2" fill="#fff"/><path d="M3.6 4H8Q11.5 6.5 12 13L12.3 22Q12.8 26.5 14.5 28H3.6Z" fill="#c4c4c4" stroke="#222" stroke-width="0.6"/><path d="M3.6 9H6.5Q8.5 9 8.5 11V12.5H6.5Q5 12.5 5 14.5V17.5Q5 19.5 6.5 19.5H8.5V21Q8.5 23 6.5 23H3.6" fill="#e4e4e4" stroke="#333" stroke-width="0.6"/><path d="M20.5 8H24Q26.5 10 28.4 11V33H22Q26 28.5 27 24.5Q23 20 21 14Z" fill="#c4c4c4" stroke="#222" stroke-width="0.6"/><path d="M28.4 14H26.5Q24.5 14 24.5 16V18.5Q24.5 20.5 26.5 20.5H28.4" fill="#e4e4e4" stroke="#333" stroke-width="0.6"/><path d="M3.5 1.5H19.5Q22 4 22 8.5L12 11.5Q11.5 5 3.5 2.5Z" fill="#e81010" stroke="#000" stroke-width="1.3" stroke-linejoin="round"/><path d="M12 11.5L22 8.5Q22.5 14.5 24 18.5L12.5 22.5Z" fill="#10c030" stroke="#000" stroke-width="1.3" stroke-linejoin="round"/><path d="M12.5 22.5L24 18.5Q26 22 30 24L23 33.5H17Q13 30.5 12.5 22.5Z" fill="#40a0f0" stroke="#000" stroke-width="1.3" stroke-linejoin="round"/></svg>
<svg class="a" style="left:1256px;top:53px" width="33" height="32" viewBox="0 0 33 32"><defs><radialGradient id="gbu" cx="0.5" cy="0.5" r="0.6"><stop offset="0" stop-color="#ffffff"/><stop offset="0.2" stop-color="#f0b0ff"/><stop offset="0.5" stop-color="#9030e0"/><stop offset="0.85" stop-color="#301060"/><stop offset="1" stop-color="#100820"/></radialGradient></defs><rect x="0" y="0" width="33" height="32" fill="url(#gbu)"/><path d="M16.5 2L18 12L28 6L20 15L31 17L20 19L27 28L17.5 21L15 31L14 21L5 27L12 18L2 16L12 14L6 5L15 12Z" fill="#c080ff" opacity="0.45"/><ellipse cx="16.5" cy="16" rx="5" ry="4.5" fill="#f8e8ff" stroke="#fff" stroke-width="1.2"/><ellipse cx="16.5" cy="16" rx="2.5" ry="2" fill="#d090ff"/></svg>
<svg class="a" style="left:1310px;top:53px" width="33" height="34" viewBox="0 0 32 34"><rect x="0.4" y="1.5" width="3.2" height="26" fill="#111"/><rect x="1.2" y="2.2" width="1.6" height="1.2" fill="#fff"/><rect x="1.2" y="4.7" width="1.6" height="1.2" fill="#fff"/><rect x="1.2" y="7.2" width="1.6" height="1.2" fill="#fff"/><rect x="1.2" y="9.7" width="1.6" height="1.2" fill="#fff"/><rect x="1.2" y="12.2" width="1.6" height="1.2" fill="#fff"/><rect x="1.2" y="14.7" width="1.6" height="1.2" fill="#fff"/><rect x="1.2" y="17.2" width="1.6" height="1.2" fill="#fff"/><rect x="1.2" y="19.7" width="1.6" height="1.2" fill="#fff"/><rect x="1.2" y="22.2" width="1.6" height="1.2" fill="#fff"/><rect x="1.2" y="24.7" width="1.6" height="1.2" fill="#fff"/><rect x="28.4" y="9.5" width="3.2" height="24" fill="#111"/><rect x="29.2" y="10.2" width="1.6" height="1.2" fill="#fff"/><rect x="29.2" y="12.7" width="1.6" height="1.2" fill="#fff"/><rect x="29.2" y="15.2" width="1.6" height="1.2" fill="#fff"/><rect x="29.2" y="17.7" width="1.6" height="1.2" fill="#fff"/><rect x="29.2" y="20.2" width="1.6" height="1.2" fill="#fff"/><rect x="29.2" y="22.7" width="1.6" height="1.2" fill="#fff"/><rect x="29.2" y="25.2" width="1.6" height="1.2" fill="#fff"/><rect x="29.2" y="27.7" width="1.6" height="1.2" fill="#fff"/><rect x="29.2" y="30.2" width="1.6" height="1.2" fill="#fff"/><path d="M3.6 4H8Q11.5 6.5 12 13L12.3 22Q12.8 26.5 14.5 28H3.6Z" fill="#c4c4c4" stroke="#222" stroke-width="0.6"/><path d="M3.6 9H6.5Q8.5 9 8.5 11V12.5H6.5Q5 12.5 5 14.5V17.5Q5 19.5 6.5 19.5H8.5V21Q8.5 23 6.5 23H3.6" fill="#e4e4e4" stroke="#333" stroke-width="0.6"/><path d="M20.5 8H24Q26.5 10 28.4 11V33H22Q26 28.5 27 24.5Q23 20 21 14Z" fill="#c4c4c4" stroke="#222" stroke-width="0.6"/><path d="M28.4 14H26.5Q24.5 14 24.5 16V18.5Q24.5 20.5 26.5 20.5H28.4" fill="#e4e4e4" stroke="#333" stroke-width="0.6"/><path d="M3.5 1.5H19.5Q22 4 22 8.5L12 11.5Q11.5 5 3.5 2.5Z" fill="#e01818" stroke="#000" stroke-width="1.3" stroke-linejoin="round"/><path d="M12 11.5L22 8.5Q22.5 14.5 24 18.5L12.5 22.5Z" fill="#e01818" stroke="#000" stroke-width="1.3" stroke-linejoin="round"/><path d="M12.5 22.5L24 18.5Q26 22 30 24L23 33.5H17Q13 30.5 12.5 22.5Z" fill="#e01818" stroke="#000" stroke-width="1.3" stroke-linejoin="round"/></svg>
<svg class="a" style="left:1349px;top:53px" width="33" height="34" viewBox="0 0 32 34"><rect x="0.4" y="1.5" width="3.2" height="26" fill="#111"/><rect x="1.2" y="2.2" width="1.6" height="1.2" fill="#fff"/><rect x="1.2" y="4.7" width="1.6" height="1.2" fill="#fff"/><rect x="1.2" y="7.2" width="1.6" height="1.2" fill="#fff"/><rect x="1.2" y="9.7" width="1.6" height="1.2" fill="#fff"/><rect x="1.2" y="12.2" width="1.6" height="1.2" fill="#fff"/><rect x="1.2" y="14.7" width="1.6" height="1.2" fill="#fff"/><rect x="1.2" y="17.2" width="1.6" height="1.2" fill="#fff"/><rect x="1.2" y="19.7" width="1.6" height="1.2" fill="#fff"/><rect x="1.2" y="22.2" width="1.6" height="1.2" fill="#fff"/><rect x="1.2" y="24.7" width="1.6" height="1.2" fill="#fff"/><rect x="28.4" y="9.5" width="3.2" height="24" fill="#111"/><rect x="29.2" y="10.2" width="1.6" height="1.2" fill="#fff"/><rect x="29.2" y="12.7" width="1.6" height="1.2" fill="#fff"/><rect x="29.2" y="15.2" width="1.6" height="1.2" fill="#fff"/><rect x="29.2" y="17.7" width="1.6" height="1.2" fill="#fff"/><rect x="29.2" y="20.2" width="1.6" height="1.2" fill="#fff"/><rect x="29.2" y="22.7" width="1.6" height="1.2" fill="#fff"/><rect x="29.2" y="25.2" width="1.6" height="1.2" fill="#fff"/><rect x="29.2" y="27.7" width="1.6" height="1.2" fill="#fff"/><rect x="29.2" y="30.2" width="1.6" height="1.2" fill="#fff"/><path d="M3.6 4H8Q11.5 6.5 12 13L12.3 22Q12.8 26.5 14.5 28H3.6Z" fill="#c4c4c4" stroke="#222" stroke-width="0.6"/><path d="M3.6 9H6.5Q8.5 9 8.5 11V12.5H6.5Q5 12.5 5 14.5V17.5Q5 19.5 6.5 19.5H8.5V21Q8.5 23 6.5 23H3.6" fill="#e4e4e4" stroke="#333" stroke-width="0.6"/><path d="M20.5 8H24Q26.5 10 28.4 11V33H22Q26 28.5 27 24.5Q23 20 21 14Z" fill="#c4c4c4" stroke="#222" stroke-width="0.6"/><path d="M28.4 14H26.5Q24.5 14 24.5 16V18.5Q24.5 20.5 26.5 20.5H28.4" fill="#e4e4e4" stroke="#333" stroke-width="0.6"/><path d="M3.5 1.5H19.5Q22 4 22 8.5L12 11.5Q11.5 5 3.5 2.5Z" fill="#20c040" stroke="#000" stroke-width="1.3" stroke-linejoin="round"/><path d="M12 11.5L22 8.5Q22.5 14.5 24 18.5L12.5 22.5Z" fill="#20c040" stroke="#000" stroke-width="1.3" stroke-linejoin="round"/><path d="M12.5 22.5L24 18.5Q26 22 30 24L23 33.5H17Q13 30.5 12.5 22.5Z" fill="#20c040" stroke="#000" stroke-width="1.3" stroke-linejoin="round"/></svg>
<svg class="a" style="left:1388px;top:53px" width="33" height="34" viewBox="0 0 32 34"><rect x="0.4" y="1.5" width="3.2" height="26" fill="#111"/><rect x="1.2" y="2.2" width="1.6" height="1.2" fill="#fff"/><rect x="1.2" y="4.7" width="1.6" height="1.2" fill="#fff"/><rect x="1.2" y="7.2" width="1.6" height="1.2" fill="#fff"/><rect x="1.2" y="9.7" width="1.6" height="1.2" fill="#fff"/><rect x="1.2" y="12.2" width="1.6" height="1.2" fill="#fff"/><rect x="1.2" y="14.7" width="1.6" height="1.2" fill="#fff"/><rect x="1.2" y="17.2" width="1.6" height="1.2" fill="#fff"/><rect x="1.2" y="19.7" width="1.6" height="1.2" fill="#fff"/><rect x="1.2" y="22.2" width="1.6" height="1.2" fill="#fff"/><rect x="1.2" y="24.7" width="1.6" height="1.2" fill="#fff"/><rect x="28.4" y="9.5" width="3.2" height="24" fill="#111"/><rect x="29.2" y="10.2" width="1.6" height="1.2" fill="#fff"/><rect x="29.2" y="12.7" width="1.6" height="1.2" fill="#fff"/><rect x="29.2" y="15.2" width="1.6" height="1.2" fill="#fff"/><rect x="29.2" y="17.7" width="1.6" height="1.2" fill="#fff"/><rect x="29.2" y="20.2" width="1.6" height="1.2" fill="#fff"/><rect x="29.2" y="22.7" width="1.6" height="1.2" fill="#fff"/><rect x="29.2" y="25.2" width="1.6" height="1.2" fill="#fff"/><rect x="29.2" y="27.7" width="1.6" height="1.2" fill="#fff"/><rect x="29.2" y="30.2" width="1.6" height="1.2" fill="#fff"/><path d="M3.6 4H8Q11.5 6.5 12 13L12.3 22Q12.8 26.5 14.5 28H3.6Z" fill="#c4c4c4" stroke="#222" stroke-width="0.6"/><path d="M3.6 9H6.5Q8.5 9 8.5 11V12.5H6.5Q5 12.5 5 14.5V17.5Q5 19.5 6.5 19.5H8.5V21Q8.5 23 6.5 23H3.6" fill="#e4e4e4" stroke="#333" stroke-width="0.6"/><path d="M20.5 8H24Q26.5 10 28.4 11V33H22Q26 28.5 27 24.5Q23 20 21 14Z" fill="#c4c4c4" stroke="#222" stroke-width="0.6"/><path d="M28.4 14H26.5Q24.5 14 24.5 16V18.5Q24.5 20.5 26.5 20.5H28.4" fill="#e4e4e4" stroke="#333" stroke-width="0.6"/><path d="M3.5 1.5H19.5Q22 4 22 8.5L12 11.5Q11.5 5 3.5 2.5Z" fill="#2050e0" stroke="#000" stroke-width="1.3" stroke-linejoin="round"/><path d="M12 11.5L22 8.5Q22.5 14.5 24 18.5L12.5 22.5Z" fill="#2050e0" stroke="#000" stroke-width="1.3" stroke-linejoin="round"/><path d="M12.5 22.5L24 18.5Q26 22 30 24L23 33.5H17Q13 30.5 12.5 22.5Z" fill="#2050e0" stroke="#000" stroke-width="1.3" stroke-linejoin="round"/></svg>
<svg class="a" style="left:1427px;top:53px" width="33" height="34" viewBox="0 0 32 34"><rect x="0.4" y="1.5" width="3.2" height="26" fill="#111"/><rect x="1.2" y="2.2" width="1.6" height="1.2" fill="#fff"/><rect x="1.2" y="4.7" width="1.6" height="1.2" fill="#fff"/><rect x="1.2" y="7.2" width="1.6" height="1.2" fill="#fff"/><rect x="1.2" y="9.7" width="1.6" height="1.2" fill="#fff"/><rect x="1.2" y="12.2" width="1.6" height="1.2" fill="#fff"/><rect x="1.2" y="14.7" width="1.6" height="1.2" fill="#fff"/><rect x="1.2" y="17.2" width="1.6" height="1.2" fill="#fff"/><rect x="1.2" y="19.7" width="1.6" height="1.2" fill="#fff"/><rect x="1.2" y="22.2" width="1.6" height="1.2" fill="#fff"/><rect x="1.2" y="24.7" width="1.6" height="1.2" fill="#fff"/><rect x="28.4" y="9.5" width="3.2" height="24" fill="#111"/><rect x="29.2" y="10.2" width="1.6" height="1.2" fill="#fff"/><rect x="29.2" y="12.7" width="1.6" height="1.2" fill="#fff"/><rect x="29.2" y="15.2" width="1.6" height="1.2" fill="#fff"/><rect x="29.2" y="17.7" width="1.6" height="1.2" fill="#fff"/><rect x="29.2" y="20.2" width="1.6" height="1.2" fill="#fff"/><rect x="29.2" y="22.7" width="1.6" height="1.2" fill="#fff"/><rect x="29.2" y="25.2" width="1.6" height="1.2" fill="#fff"/><rect x="29.2" y="27.7" width="1.6" height="1.2" fill="#fff"/><rect x="29.2" y="30.2" width="1.6" height="1.2" fill="#fff"/><path d="M3.6 4H8Q11.5 6.5 12 13L12.3 22Q12.8 26.5 14.5 28H3.6Z" fill="#c4c4c4" stroke="#222" stroke-width="0.6"/><path d="M3.6 9H6.5Q8.5 9 8.5 11V12.5H6.5Q5 12.5 5 14.5V17.5Q5 19.5 6.5 19.5H8.5V21Q8.5 23 6.5 23H3.6" fill="#e4e4e4" stroke="#333" stroke-width="0.6"/><path d="M20.5 8H24Q26.5 10 28.4 11V33H22Q26 28.5 27 24.5Q23 20 21 14Z" fill="#c4c4c4" stroke="#222" stroke-width="0.6"/><path d="M28.4 14H26.5Q24.5 14 24.5 16V18.5Q24.5 20.5 26.5 20.5H28.4" fill="#e4e4e4" stroke="#333" stroke-width="0.6"/><path d="M3.5 1.5H19.5Q22 4 22 8.5L12 11.5Q11.5 5 3.5 2.5Z" fill="#f0e040" stroke="#000" stroke-width="1.3" stroke-linejoin="round"/><path d="M12 11.5L22 8.5Q22.5 14.5 24 18.5L12.5 22.5Z" fill="#f0e040" stroke="#000" stroke-width="1.3" stroke-linejoin="round"/><path d="M12.5 22.5L24 18.5Q26 22 30 24L23 33.5H17Q13 30.5 12.5 22.5Z" fill="#f0e040" stroke="#000" stroke-width="1.3" stroke-linejoin="round"/></svg>
<svg class="a" style="left:1466px;top:53px" width="33" height="34" viewBox="0 0 32 34"><rect x="0.4" y="1.5" width="3.2" height="26" fill="#111"/><rect x="1.2" y="2.2" width="1.6" height="1.2" fill="#fff"/><rect x="1.2" y="4.7" width="1.6" height="1.2" fill="#fff"/><rect x="1.2" y="7.2" width="1.6" height="1.2" fill="#fff"/><rect x="1.2" y="9.7" width="1.6" height="1.2" fill="#fff"/><rect x="1.2" y="12.2" width="1.6" height="1.2" fill="#fff"/><rect x="1.2" y="14.7" width="1.6" height="1.2" fill="#fff"/><rect x="1.2" y="17.2" width="1.6" height="1.2" fill="#fff"/><rect x="1.2" y="19.7" width="1.6" height="1.2" fill="#fff"/><rect x="1.2" y="22.2" width="1.6" height="1.2" fill="#fff"/><rect x="1.2" y="24.7" width="1.6" height="1.2" fill="#fff"/><rect x="28.4" y="9.5" width="3.2" height="24" fill="#111"/><rect x="29.2" y="10.2" width="1.6" height="1.2" fill="#fff"/><rect x="29.2" y="12.7" width="1.6" height="1.2" fill="#fff"/><rect x="29.2" y="15.2" width="1.6" height="1.2" fill="#fff"/><rect x="29.2" y="17.7" width="1.6" height="1.2" fill="#fff"/><rect x="29.2" y="20.2" width="1.6" height="1.2" fill="#fff"/><rect x="29.2" y="22.7" width="1.6" height="1.2" fill="#fff"/><rect x="29.2" y="25.2" width="1.6" height="1.2" fill="#fff"/><rect x="29.2" y="27.7" width="1.6" height="1.2" fill="#fff"/><rect x="29.2" y="30.2" width="1.6" height="1.2" fill="#fff"/><path d="M3.6 4H8Q11.5 6.5 12 13L12.3 22Q12.8 26.5 14.5 28H3.6Z" fill="#c4c4c4" stroke="#222" stroke-width="0.6"/><path d="M3.6 9H6.5Q8.5 9 8.5 11V12.5H6.5Q5 12.5 5 14.5V17.5Q5 19.5 6.5 19.5H8.5V21Q8.5 23 6.5 23H3.6" fill="#e4e4e4" stroke="#333" stroke-width="0.6"/><path d="M20.5 8H24Q26.5 10 28.4 11V33H22Q26 28.5 27 24.5Q23 20 21 14Z" fill="#c4c4c4" stroke="#222" stroke-width="0.6"/><path d="M28.4 14H26.5Q24.5 14 24.5 16V18.5Q24.5 20.5 26.5 20.5H28.4" fill="#e4e4e4" stroke="#333" stroke-width="0.6"/><path d="M3.5 1.5H19.5Q22 4 22 8.5L12 11.5Q11.5 5 3.5 2.5Z" fill="#40d8f0" stroke="#000" stroke-width="1.3" stroke-linejoin="round"/><path d="M12 11.5L22 8.5Q22.5 14.5 24 18.5L12.5 22.5Z" fill="#40d8f0" stroke="#000" stroke-width="1.3" stroke-linejoin="round"/><path d="M12.5 22.5L24 18.5Q26 22 30 24L23 33.5H17Q13 30.5 12.5 22.5Z" fill="#40d8f0" stroke="#000" stroke-width="1.3" stroke-linejoin="round"/></svg>
<svg class="a" style="left:1505px;top:53px" width="33" height="34" viewBox="0 0 32 34"><rect x="0.4" y="1.5" width="3.2" height="26" fill="#111"/><rect x="1.2" y="2.2" width="1.6" height="1.2" fill="#fff"/><rect x="1.2" y="4.7" width="1.6" height="1.2" fill="#fff"/><rect x="1.2" y="7.2" width="1.6" height="1.2" fill="#fff"/><rect x="1.2" y="9.7" width="1.6" height="1.2" fill="#fff"/><rect x="1.2" y="12.2" width="1.6" height="1.2" fill="#fff"/><rect x="1.2" y="14.7" width="1.6" height="1.2" fill="#fff"/><rect x="1.2" y="17.2" width="1.6" height="1.2" fill="#fff"/><rect x="1.2" y="19.7" width="1.6" height="1.2" fill="#fff"/><rect x="1.2" y="22.2" width="1.6" height="1.2" fill="#fff"/><rect x="1.2" y="24.7" width="1.6" height="1.2" fill="#fff"/><rect x="28.4" y="9.5" width="3.2" height="24" fill="#111"/><rect x="29.2" y="10.2" width="1.6" height="1.2" fill="#fff"/><rect x="29.2" y="12.7" width="1.6" height="1.2" fill="#fff"/><rect x="29.2" y="15.2" width="1.6" height="1.2" fill="#fff"/><rect x="29.2" y="17.7" width="1.6" height="1.2" fill="#fff"/><rect x="29.2" y="20.2" width="1.6" height="1.2" fill="#fff"/><rect x="29.2" y="22.7" width="1.6" height="1.2" fill="#fff"/><rect x="29.2" y="25.2" width="1.6" height="1.2" fill="#fff"/><rect x="29.2" y="27.7" width="1.6" height="1.2" fill="#fff"/><rect x="29.2" y="30.2" width="1.6" height="1.2" fill="#fff"/><path d="M3.6 4H8Q11.5 6.5 12 13L12.3 22Q12.8 26.5 14.5 28H3.6Z" fill="#c4c4c4" stroke="#222" stroke-width="0.6"/><path d="M3.6 9H6.5Q8.5 9 8.5 11V12.5H6.5Q5 12.5 5 14.5V17.5Q5 19.5 6.5 19.5H8.5V21Q8.5 23 6.5 23H3.6" fill="#e4e4e4" stroke="#333" stroke-width="0.6"/><path d="M20.5 8H24Q26.5 10 28.4 11V33H22Q26 28.5 27 24.5Q23 20 21 14Z" fill="#c4c4c4" stroke="#222" stroke-width="0.6"/><path d="M28.4 14H26.5Q24.5 14 24.5 16V18.5Q24.5 20.5 26.5 20.5H28.4" fill="#e4e4e4" stroke="#333" stroke-width="0.6"/><path d="M3.5 1.5H19.5Q22 4 22 8.5L12 11.5Q11.5 5 3.5 2.5Z" fill="#a020d0" stroke="#000" stroke-width="1.3" stroke-linejoin="round"/><path d="M12 11.5L22 8.5Q22.5 14.5 24 18.5L12.5 22.5Z" fill="#a020d0" stroke="#000" stroke-width="1.3" stroke-linejoin="round"/><path d="M12.5 22.5L24 18.5Q26 22 30 24L23 33.5H17Q13 30.5 12.5 22.5Z" fill="#a020d0" stroke="#000" stroke-width="1.3" stroke-linejoin="round"/></svg>
<svg class="a" style="left:1544px;top:53px" width="33" height="34" viewBox="0 0 32 34"><rect x="0.4" y="1.5" width="3.2" height="26" fill="#111"/><rect x="1.2" y="2.2" width="1.6" height="1.2" fill="#fff"/><rect x="1.2" y="4.7" width="1.6" height="1.2" fill="#fff"/><rect x="1.2" y="7.2" width="1.6" height="1.2" fill="#fff"/><rect x="1.2" y="9.7" width="1.6" height="1.2" fill="#fff"/><rect x="1.2" y="12.2" width="1.6" height="1.2" fill="#fff"/><rect x="1.2" y="14.7" width="1.6" height="1.2" fill="#fff"/><rect x="1.2" y="17.2" width="1.6" height="1.2" fill="#fff"/><rect x="1.2" y="19.7" width="1.6" height="1.2" fill="#fff"/><rect x="1.2" y="22.2" width="1.6" height="1.2" fill="#fff"/><rect x="1.2" y="24.7" width="1.6" height="1.2" fill="#fff"/><rect x="28.4" y="9.5" width="3.2" height="24" fill="#111"/><rect x="29.2" y="10.2" width="1.6" height="1.2" fill="#fff"/><rect x="29.2" y="12.7" width="1.6" height="1.2" fill="#fff"/><rect x="29.2" y="15.2" width="1.6" height="1.2" fill="#fff"/><rect x="29.2" y="17.7" width="1.6" height="1.2" fill="#fff"/><rect x="29.2" y="20.2" width="1.6" height="1.2" fill="#fff"/><rect x="29.2" y="22.7" width="1.6" height="1.2" fill="#fff"/><rect x="29.2" y="25.2" width="1.6" height="1.2" fill="#fff"/><rect x="29.2" y="27.7" width="1.6" height="1.2" fill="#fff"/><rect x="29.2" y="30.2" width="1.6" height="1.2" fill="#fff"/><path d="M3.6 4H8Q11.5 6.5 12 13L12.3 22Q12.8 26.5 14.5 28H3.6Z" fill="#c4c4c4" stroke="#222" stroke-width="0.6"/><path d="M3.6 9H6.5Q8.5 9 8.5 11V12.5H6.5Q5 12.5 5 14.5V17.5Q5 19.5 6.5 19.5H8.5V21Q8.5 23 6.5 23H3.6" fill="#e4e4e4" stroke="#333" stroke-width="0.6"/><path d="M20.5 8H24Q26.5 10 28.4 11V33H22Q26 28.5 27 24.5Q23 20 21 14Z" fill="#c4c4c4" stroke="#222" stroke-width="0.6"/><path d="M28.4 14H26.5Q24.5 14 24.5 16V18.5Q24.5 20.5 26.5 20.5H28.4" fill="#e4e4e4" stroke="#333" stroke-width="0.6"/><path d="M3.5 1.5H19.5Q22 4 22 8.5L12 11.5Q11.5 5 3.5 2.5Z" fill="#e81010" stroke="#000" stroke-width="1.3" stroke-linejoin="round"/><path d="M12 11.5L22 8.5Q22.5 14.5 24 18.5L12.5 22.5Z" fill="#10c030" stroke="#000" stroke-width="1.3" stroke-linejoin="round"/><path d="M12.5 22.5L24 18.5Q26 22 30 24L23 33.5H17Q13 30.5 12.5 22.5Z" fill="#40a0f0" stroke="#000" stroke-width="1.3" stroke-linejoin="round"/></svg>
<div class="a" style="left:0px;top:89px;width:1920px;height:953px;background:#fdfdfd;"></div>
<div class="a" style="left:0px;top:89px;width:1920px;height:1px;background:#c9ced6;"></div>
<div class="a" style="left:0px;top:90px;width:1900px;height:3px;background:#727272;"></div>
<div class="a" style="left:0px;top:93px;width:1900px;height:1px;background:#b0b0b0;"></div>
<div class="a" style="left:0px;top:89px;width:1px;height:950px;background:#9a9a9a;"></div>
<div class="a" style="left:1px;top:89px;width:1px;height:950px;background:#6e6e6e;"></div>
<div class="a" style="left:2px;top:155px;width:1898px;height:1px;background:#b5b5b5;"></div>
<div class="a" style="left:2px;top:156px;width:1898px;height:3px;background:#6f6f6f;"></div>
<div class="a" style="left:2px;top:379px;width:1898px;height:2px;background:#8a8a8a;"></div>
<div class="a" style="left:2px;top:381px;width:1898px;height:3px;background:#787878;"></div>
<div class="a" style="left:1307px;top:94px;width:1px;height:61px;background:#a0a0a0;"></div>
<div class="a" style="left:384px;top:384px;width:2px;height:637px;background:#6a6a6a;"></div>
<div class="a" style="left:386px;top:384px;width:2px;height:637px;background:#a0a0a0;"></div>
<div class="a" style="left:1901px;top:94px;width:19px;height:948px;background:#f0f0f0;"></div>
<div class="a" style="left:1901px;top:94px;width:1px;height:927px;background:#ffffff;"></div>
<div class="a" style="left:1918px;top:94px;width:1px;height:946px;background:#d8d8d8;"></div>
<div class="a" style="left:1897px;top:89px;width:4px;height:932px;background:#777777;"></div>
<div class="a" style="left:1900px;top:89px;width:19px;height:5px;background:#737373;"></div>
<div class="a" style="left:1909px;top:109px;width:2px;height:869px;background:#888888;"></div>
<div class="a" style="left:2px;top:1017px;width:1899px;height:2px;background:#7a7a7a;"></div>
<div class="a" style="left:2px;top:1019px;width:1899px;height:3px;background:#b4b4b4;"></div>
<div class="a" style="left:2px;top:1022px;width:1899px;height:20px;background:#f0f0f0;"></div>
<div class="a" style="left:2px;top:1022px;width:1899px;height:1px;background:#fff;"></div>
<div class="a" style="left:19px;top:1030px;width:1825px;height:2px;background:#8c8c8c;"></div>
<div class="a" style="left:5px;top:97px;width:1300px;height:57px;border:2px solid #7a7a7a;border-top:1px solid #727272;background:#ebebeb"></div>
<div class="a" style="left:7px;top:98px;width:1296px;height:17px;background:linear-gradient(#e9eff8,#e3eaf5);border-bottom:1px solid #a2a8b0;border-top-left-radius:6px;border-top-right-radius:6px"></div>
<div class="ptitle" style="left:12px;top:101px;font-size:12.8px">View</div>
<div class="a" style="left:9px;top:122px;width:200px;height:23px;background:#fff;border:1px solid #c8c8c8"></div>
<div class="t" style="left:13px;top:127px;font-size:14px">Red saturation scale</div>
<svg class="a" style="left:194px;top:131px" width="10" height="6"><path d="M0.5 0.5L5 5L9.5 0.5" fill="none" stroke="#444" stroke-width="1.1"/></svg>
<div class="a" style="left:216px;top:119px;width:1056px;height:27px;background:#efefef;border-top:1px solid #d0d0d0;border-left:1px solid #d0d0d0"></div>
<div class="t b" style="left:217px;top:120px;font-size:16px;letter-spacing:0.05px">Color Space: HDTV Rec709 , White Point: D65, EOTF:&nbsp; SDR, Power law (black compensation) w/gamma = 2.20, # of measures: 0 [19:46:01]</div>
<div class="a" style="left:1279px;top:121px;width:15px;height:11px;background:#eaeaea;border:1px solid #c4c4c4"></div>
<div class="a" style="left:1279px;top:133px;width:15px;height:11px;background:#eaeaea;border:1px solid #c4c4c4"></div>
<svg class="a" style="left:1283px;top:124px" width="8" height="5"><path d="M0 4.5L4 0.5L8 4.5Z" fill="#000"/></svg>
<svg class="a" style="left:1283px;top:137px" width="8" height="5"><path d="M0 0.5L4 4.5L8 0.5Z" fill="#000"/></svg>
<div class="a" style="left:1311px;top:97px;width:306px;height:57px;border:2px solid #7a7a7a;border-top:1px solid #727272;background:#ebebeb"></div>
<div class="a" style="left:1313px;top:98px;width:302px;height:17px;background:linear-gradient(#e9eff8,#e3eaf5);border-bottom:1px solid #a2a8b0;border-top-left-radius:6px;border-top-right-radius:6px"></div>
<div class="ptitle" style="left:1318px;top:101px;font-size:13.3px">Sensor</div>
<div class="t" style="left:1316px;top:117px;font-size:14px">Simulated sensor</div>
<div class="a" style="left:1314px;top:135px;width:120px;height:16px;background:#e6e6e6;"></div>
<div class="t" style="left:1318px;top:134px;font-size:14px">Adaptive</div>
<svg class="a" style="left:1424px;top:135px" width="12" height="13"><path d="M0.5 0.5L11.5 6.5L0.5 12.5Z" fill="#6cd46c" stroke="#49b449" stroke-width="0.8"/></svg>
<svg class="a" style="left:1588px;top:132px" width="19" height="17"><defs><linearGradient id="ged" x1="0" y1="0" x2="1" y2="1"><stop offset="0" stop-color="#f4f8ff"/><stop offset="1" stop-color="#a8c8f0"/></linearGradient></defs><path d="M1 3.5L10.5 1.2L11.5 14L2.5 16Z" fill="#2a5cc8" stroke="#1a3a90" stroke-width="0.7"/><path d="M2.6 4.6L9.6 2.8L10.4 12.8L3.6 14.4Z" fill="url(#ged)"/><path d="M4 9L6 11.5L9 6" fill="none" stroke="#d8b020" stroke-width="1.3"/><path d="M8 11L16 6.5" stroke="#3a7ae0" stroke-width="1.6"/><circle cx="16.5" cy="6.2" r="1.1" fill="#e03030"/></svg>
<div class="a" style="left:1621px;top:97px;width:120px;height:57px;border:2px solid #7a7a7a;border-top:1px solid #727272;background:#ebebeb"></div>
<div class="a" style="left:1623px;top:98px;width:116px;height:17px;background:linear-gradient(#e9eff8,#e3eaf5);border-bottom:1px solid #a2a8b0;border-top-left-radius:6px;border-top-right-radius:6px"></div>
<div class="ptitle" style="left:1628px;top:101px;font-size:13.5px">Generator</div>
<div class="t" style="left:1624px;top:117px;font-size:13.4px">DVD manual</div>
<svg class="a" style="left:1718px;top:134px" width="19" height="17"><defs><linearGradient id="ged" x1="0" y1="0" x2="1" y2="1"><stop offset="0" stop-color="#f4f8ff"/><stop offset="1" stop-color="#a8c8f0"/></linearGradient></defs><path d="M1 3.5L10.5 1.2L11.5 14L2.5 16Z" fill="#2a5cc8" stroke="#1a3a90" stroke-width="0.7"/><path d="M2.6 4.6L9.6 2.8L10.4 12.8L3.6 14.4Z" fill="url(#ged)"/><path d="M4 9L6 11.5L9 6" fill="none" stroke="#d8b020" stroke-width="1.3"/><path d="M8 11L16 6.5" stroke="#3a7ae0" stroke-width="1.6"/><circle cx="16.5" cy="6.2" r="1.1" fill="#e03030"/></svg>
<div class="a" style="left:1745px;top:97px;width:150px;height:57px;border:2px solid #7a7a7a;border-top:1px solid #727272;background:#ebebeb"></div>
<div class="a" style="left:1747px;top:98px;width:146px;height:17px;background:linear-gradient(#e9eff8,#e3eaf5);border-bottom:1px solid #a2a8b0;border-top-left-radius:6px;border-top-right-radius:6px"></div>
<div class="ptitle" style="left:1752px;top:101px;font-size:13.5px">Parameters</div>
<div class="a" style="left:1754px;top:119px;width:13px;height:13px;border:1px solid #333;border-radius:2px;background:#fff"></div>
<div class="t" style="left:1771px;top:119px;font-size:13.7px">Reference</div>
<div class="a" style="left:1754px;top:137px;width:13px;height:13px;border:1px solid #d4d4d4;border-radius:2px;background:#f4f4f4"></div>
<div class="t" style="left:1771px;top:136px;font-size:13.75px;color:#a0a0a0">XYZ Adjustment</div>
<div class="a" style="left:5px;top:162px;width:1805px;height:217px;border:2px solid #7a7a7a;border-top:1px solid #727272;background:#ebebeb"></div>
<div class="a" style="left:7px;top:163px;width:1801px;height:14px;background:linear-gradient(#e9eff8,#e3eaf5);border-bottom:1px solid #a2a8b0;border-top-left-radius:6px;border-top-right-radius:6px"></div>
<div class="t b" style="left:14px;top:166px;font-size:11px;color:#454545">( Average dE: 8.04 [0.61,3.49,5.09] max: 13.62 [CIE2000] )</div>
<div class="a" style="left:6px;top:179px;width:1px;height:198px;background:#e81010;"></div>
<div class="a" style="left:6px;top:376px;width:1802px;height:1px;background:#e81010;"></div>
<div class="a" style="left:1807px;top:168px;width:1px;height:209px;background:#e81010;"></div>
<div class="a" style="left:1790px;top:179px;width:17px;height:1px;background:#e81010;"></div>
<svg class="a" style="left:1800px;top:162px" width="9" height="8"><path d="M1 1.5Q6.5 1.5 7.5 7" fill="none" stroke="#e81010" stroke-width="1" stroke-dasharray="1.2 0.8"/></svg>
<div class="a" style="left:1811px;top:159px;width:1px;height:222px;background:#777;"></div>
<div class="a" style="left:8px;top:176px;width:1784px;height:2px;background:#727272;"></div>
<div class="a" style="left:8px;top:176px;width:2px;height:197px;background:#727272;"></div>
<div class="a" style="left:10px;top:178px;width:1780px;height:177px;background:#f0f0f0;"></div>
<div class="a" style="left:10px;top:178px;width:53px;height:23px;background:#f0f0f0;"></div>
<div class="t b" style="left:10px;width:53px;text-align:center;top:184px;font-size:11.5px">% Sat</div>
<div class="a" style="left:64px;top:178px;width:341px;height:23px;background:#f0f0f0;"></div>
<div class="t b" style="left:64px;width:341px;text-align:center;top:184px;font-size:12px">0</div>
<div class="a" style="left:406px;top:178px;width:341px;height:23px;background:#f0c1c1;"></div>
<div class="t b" style="left:406px;width:341px;text-align:center;top:184px;font-size:12px">25</div>
<div class="a" style="left:748px;top:178px;width:340px;height:23px;background:#f09191;"></div>
<div class="t b" style="left:748px;width:340px;text-align:center;top:184px;font-size:12px">50</div>
<div class="a" style="left:1089px;top:178px;width:340px;height:23px;background:#f06262;"></div>
<div class="t b" style="left:1089px;width:340px;text-align:center;top:184px;font-size:12px">75</div>
<div class="a" style="left:1430px;top:178px;width:340px;height:23px;background:#f03232;"></div>
<div class="t b" style="left:1430px;width:340px;text-align:center;top:184px;font-size:12px">100</div>
<div class="a" style="left:10px;top:200px;width:1761px;height:1px;background:#6e6e6e;"></div>
<div class="a" style="left:10px;top:201px;width:53px;height:25px;background:#f0f0f0;"></div>
<div class="t b" style="left:10px;width:53px;text-align:center;top:207px;font-size:11.5px">x</div>
<div class="a" style="left:64px;top:201px;width:341px;height:25px;background:#ffffff;"></div>
<div class="t" style="left:64px;width:340px;text-align:right;top:208px;font-size:12.6px;transform:scaleX(0.85);transform-origin:100% 0">0.2748</div>
<div class="a" style="left:406px;top:201px;width:341px;height:25px;background:#ffffff;"></div>
<div class="t" style="left:406px;width:340px;text-align:right;top:208px;font-size:12.6px;transform:scaleX(0.85);transform-origin:100% 0">0.3532</div>
<div class="a" style="left:748px;top:201px;width:340px;height:25px;background:#ffffff;"></div>
<div class="t" style="left:748px;width:339px;text-align:right;top:208px;font-size:12.6px;transform:scaleX(0.85);transform-origin:100% 0">0.4377</div>
<div class="a" style="left:1089px;top:201px;width:340px;height:25px;background:#ffffff;"></div>
<div class="t" style="left:1089px;width:339px;text-align:right;top:208px;font-size:12.6px;transform:scaleX(0.85);transform-origin:100% 0">0.5232</div>
<div class="a" style="left:1430px;top:201px;width:340px;height:25px;background:#ffffff;"></div>
<div class="t" style="left:1430px;width:339px;text-align:right;top:208px;font-size:12.6px;transform:scaleX(0.85);transform-origin:100% 0">0.6274</div>
<div class="a" style="left:64px;top:225px;width:1707px;height:1px;background:#c6c6c6;"></div>
<div class="a" style="left:10px;top:225px;width:54px;height:1px;background:#6e6e6e;"></div>
<div class="a" style="left:10px;top:226px;width:53px;height:25px;background:#f0f0f0;"></div>
<div class="t b" style="left:10px;width:53px;text-align:center;top:232px;font-size:11.5px">y</div>
<div class="a" style="left:64px;top:226px;width:341px;height:25px;background:#ffffff;"></div>
<div class="t" style="left:64px;width:340px;text-align:right;top:233px;font-size:12.6px;transform:scaleX(0.85);transform-origin:100% 0">0.2737</div>
<div class="a" style="left:406px;top:226px;width:341px;height:25px;background:#ffffff;"></div>
<div class="t" style="left:406px;width:340px;text-align:right;top:233px;font-size:12.6px;transform:scaleX(0.85);transform-origin:100% 0">0.2855</div>
<div class="a" style="left:748px;top:226px;width:340px;height:25px;background:#ffffff;"></div>
<div class="t" style="left:748px;width:339px;text-align:right;top:233px;font-size:12.6px;transform:scaleX(0.85);transform-origin:100% 0">0.2985</div>
<div class="a" style="left:1089px;top:226px;width:340px;height:25px;background:#ffffff;"></div>
<div class="t" style="left:1089px;width:339px;text-align:right;top:233px;font-size:12.6px;transform:scaleX(0.85);transform-origin:100% 0">0.3114</div>
<div class="a" style="left:1430px;top:226px;width:340px;height:25px;background:#ffffff;"></div>
<div class="t" style="left:1430px;width:339px;text-align:right;top:233px;font-size:12.6px;transform:scaleX(0.85);transform-origin:100% 0">0.3319</div>
<div class="a" style="left:64px;top:250px;width:1707px;height:1px;background:#c6c6c6;"></div>
<div class="a" style="left:10px;top:250px;width:54px;height:1px;background:#6e6e6e;"></div>
<div class="a" style="left:10px;top:251px;width:53px;height:25px;background:#f0f0f0;"></div>
<div class="t b" style="left:10px;width:53px;text-align:center;top:257px;font-size:11.5px">Y</div>
<div class="a" style="left:64px;top:251px;width:341px;height:25px;background:#ffffff;"></div>
<div class="t" style="left:64px;width:340px;text-align:right;top:258px;font-size:12.6px;transform:scaleX(0.85);transform-origin:100% 0">34.186</div>
<div class="a" style="left:406px;top:251px;width:341px;height:25px;background:#ffffff;"></div>
<div class="t" style="left:406px;width:340px;text-align:right;top:258px;font-size:12.6px;transform:scaleX(0.85);transform-origin:100% 0">34.331</div>
<div class="a" style="left:748px;top:251px;width:340px;height:25px;background:#ffffff;"></div>
<div class="t" style="left:748px;width:339px;text-align:right;top:258px;font-size:12.6px;transform:scaleX(0.85);transform-origin:100% 0">34.412</div>
<div class="a" style="left:1089px;top:251px;width:340px;height:25px;background:#ffffff;"></div>
<div class="t" style="left:1089px;width:339px;text-align:right;top:258px;font-size:12.6px;transform:scaleX(0.85);transform-origin:100% 0">35.486</div>
<div class="a" style="left:1430px;top:251px;width:340px;height:25px;background:#ffffff;"></div>
<div class="t" style="left:1430px;width:339px;text-align:right;top:258px;font-size:12.6px;transform:scaleX(0.85);transform-origin:100% 0">35.511</div>
<div class="a" style="left:64px;top:275px;width:1707px;height:1px;background:#c6c6c6;"></div>
<div class="a" style="left:10px;top:275px;width:54px;height:1px;background:#6e6e6e;"></div>
<div class="a" style="left:10px;top:276px;width:53px;height:25px;background:#f0f0f0;"></div>
<div class="t b" style="left:10px;width:53px;text-align:center;top:282px;font-size:11.5px">Delta E</div>
<div class="a" style="left:64px;top:276px;width:341px;height:25px;background:#ffaaaa;"></div>
<div class="t b" style="left:64px;width:340px;text-align:right;top:283px;font-size:12.6px;transform:scaleX(0.9);transform-origin:100% 0">13.6</div>
<div class="a" style="left:406px;top:276px;width:341px;height:25px;background:#ffaaaa;"></div>
<div class="t b" style="left:406px;width:340px;text-align:right;top:283px;font-size:12.6px;transform:scaleX(0.9);transform-origin:100% 0">10.6</div>
<div class="a" style="left:748px;top:276px;width:340px;height:25px;background:#ffaaaa;"></div>
<div class="t b" style="left:748px;width:339px;text-align:right;top:283px;font-size:12.6px;transform:scaleX(0.9);transform-origin:100% 0">8.0</div>
<div class="a" style="left:1089px;top:276px;width:340px;height:25px;background:#ffaaaa;"></div>
<div class="t b" style="left:1089px;width:339px;text-align:right;top:283px;font-size:12.6px;transform:scaleX(0.9);transform-origin:100% 0">6.1</div>
<div class="a" style="left:1430px;top:276px;width:340px;height:25px;background:#aaffaa;"></div>
<div class="t b" style="left:1430px;width:339px;text-align:right;top:283px;font-size:12.6px;transform:scaleX(0.9);transform-origin:100% 0">1.8</div>
<div class="a" style="left:64px;top:300px;width:1707px;height:1px;background:#c6c6c6;"></div>
<div class="a" style="left:10px;top:300px;width:54px;height:1px;background:#6e6e6e;"></div>
<div class="a" style="left:10px;top:301px;width:53px;height:25px;background:#f0f0f0;"></div>
<div class="t b" style="left:10px;width:53px;text-align:center;top:307px;font-size:11.5px">delta xy</div>
<div class="a" style="left:64px;top:301px;width:341px;height:25px;background:#f0f0f0;"></div>
<div class="t" style="left:64px;width:340px;text-align:right;top:308px;font-size:12.6px;transform:scaleX(0.85);transform-origin:100% 0">0.0671</div>
<div class="a" style="left:406px;top:301px;width:341px;height:25px;background:#f0f0f0;"></div>
<div class="t" style="left:406px;width:340px;text-align:right;top:308px;font-size:12.6px;transform:scaleX(0.85);transform-origin:100% 0">0.0597</div>
<div class="a" style="left:748px;top:301px;width:340px;height:25px;background:#f0f0f0;"></div>
<div class="t" style="left:748px;width:339px;text-align:right;top:308px;font-size:12.6px;transform:scaleX(0.85);transform-origin:100% 0">0.0480</div>
<div class="a" style="left:1089px;top:301px;width:340px;height:25px;background:#f0f0f0;"></div>
<div class="t" style="left:1089px;width:339px;text-align:right;top:308px;font-size:12.6px;transform:scaleX(0.85);transform-origin:100% 0">0.0386</div>
<div class="a" style="left:1430px;top:301px;width:340px;height:25px;background:#f0f0f0;"></div>
<div class="t" style="left:1430px;width:339px;text-align:right;top:308px;font-size:12.6px;transform:scaleX(0.85);transform-origin:100% 0">0.0128</div>
<div class="a" style="left:64px;top:325px;width:1707px;height:1px;background:#c6c6c6;"></div>
<div class="a" style="left:10px;top:325px;width:54px;height:1px;background:#6e6e6e;"></div>
<div class="a" style="left:10px;top:326px;width:53px;height:25px;background:#f0f0f0;"></div>
<div class="t b" style="left:10px;width:53px;text-align:center;top:332px;font-size:11.5px">delta L</div>
<div class="a" style="left:64px;top:326px;width:341px;height:25px;background:#dddddd;"></div>
<div class="t" style="left:64px;width:340px;text-align:right;top:333px;font-size:12.6px;transform:scaleX(0.85);transform-origin:100% 0">+0.6 %</div>
<div class="a" style="left:406px;top:326px;width:341px;height:25px;background:#dddddd;"></div>
<div class="t" style="left:406px;width:340px;text-align:right;top:333px;font-size:12.6px;transform:scaleX(0.85);transform-origin:100% 0">+0.4 %</div>
<div class="a" style="left:748px;top:326px;width:340px;height:25px;background:#dddddd;"></div>
<div class="t" style="left:748px;width:339px;text-align:right;top:333px;font-size:12.6px;transform:scaleX(0.85);transform-origin:100% 0">+1.2 %</div>
<div class="a" style="left:1089px;top:326px;width:340px;height:25px;background:#dddddd;"></div>
<div class="t" style="left:1089px;width:339px;text-align:right;top:333px;font-size:12.6px;transform:scaleX(0.85);transform-origin:100% 0">+5.8 %</div>
<div class="a" style="left:1430px;top:326px;width:340px;height:25px;background:#dddddd;"></div>
<div class="t" style="left:1430px;width:339px;text-align:right;top:333px;font-size:12.6px;transform:scaleX(0.85);transform-origin:100% 0">+5.9 %</div>
<div class="a" style="left:64px;top:350px;width:1707px;height:1px;background:#c6c6c6;"></div>
<div class="a" style="left:10px;top:350px;width:54px;height:1px;background:#6e6e6e;"></div>
<div class="a" style="left:63px;top:178px;width:2px;height:177px;background:#6e6e6e;"></div>
<div class="a" style="left:405px;top:202px;width:1px;height:153px;background:#c6c6c6;"></div>
<div class="a" style="left:405px;top:178px;width:1px;height:22px;background:#6e6e6e;"></div>
<div class="a" style="left:406px;top:178px;width:1px;height:22px;background:#ffffff;"></div>
<div class="a" style="left:747px;top:202px;width:1px;height:153px;background:#c6c6c6;"></div>
<div class="a" style="left:747px;top:178px;width:1px;height:22px;background:#6e6e6e;"></div>
<div class="a" style="left:748px;top:178px;width:1px;height:22px;background:#ffffff;"></div>
<div class="a" style="left:1088px;top:202px;width:1px;height:153px;background:#c6c6c6;"></div>
<div class="a" style="left:1088px;top:178px;width:1px;height:22px;background:#6e6e6e;"></div>
<div class="a" style="left:1089px;top:178px;width:1px;height:22px;background:#ffffff;"></div>
<div class="a" style="left:1429px;top:202px;width:1px;height:153px;background:#c6c6c6;"></div>
<div class="a" style="left:1429px;top:178px;width:1px;height:22px;background:#6e6e6e;"></div>
<div class="a" style="left:1430px;top:178px;width:1px;height:22px;background:#ffffff;"></div>
<div class="a" style="left:1770px;top:178px;width:1px;height:177px;background:#c6c6c6;"></div>
<div class="a" style="left:10px;top:351px;width:1761px;height:4px;background:#f0f0f0;"></div>
<div class="a" style="left:10px;top:355px;width:1782px;height:18px;background:#f0f0f0;"></div>
<div class="a" style="left:63px;top:351px;width:1px;height:4px;background:#6e6e6e;"></div>
<svg class="a" style="left:15px;top:359px" width="7" height="9"><path d="M6.5 0.5V8.5L0.5 4.5Z" fill="#a0a0a0"/></svg>
<svg class="a" style="left:1759px;top:359px" width="7" height="9"><path d="M0.5 0.5V8.5L6.5 4.5Z" fill="#a0a0a0"/></svg>
<div class="a" style="left:1771px;top:178px;width:20px;height:177px;background:#f0f0f0;"></div>
<div class="a" style="left:1779px;top:195px;width:2px;height:141px;background:#8a8a8a;"></div>
<div class="a" style="left:1812px;top:159px;width:85px;height:103px;background:#fdfdfd;"></div>
<div class="a" style="left:1814px;top:162px;width:82px;height:100px;border:2px solid #7a7a7a;border-top:1px solid #727272;background:#ebebeb"></div>
<div class="a" style="left:1816px;top:163px;width:78px;height:17px;background:linear-gradient(#e9eff8,#e3eaf5);border-bottom:1px solid #a2a8b0;border-top-left-radius:6px;border-top-right-radius:6px"></div>
<div class="ptitle" style="left:1821px;top:166px;font-size:13.2px">Display</div>
<svg class="a" style="left:1822px;top:181px" width="13" height="13"><circle cx="6.5" cy="6.5" r="5.8" fill="#f6f6f6" stroke="#c8c8c8" stroke-width="1"/></svg>
<div class="t" style="left:1838px;top:181px;font-size:13px;color:#a0a0a0">Sensor</div>
<svg class="a" style="left:1822px;top:197px" width="13" height="13"><circle cx="6.5" cy="6.5" r="5.8" fill="#fff" stroke="#333" stroke-width="1"/></svg>
<div class="t" style="left:1838px;top:197px;font-size:13px;color:#000">RGB</div>
<svg class="a" style="left:1822px;top:213px" width="13" height="13"><circle cx="6.5" cy="6.5" r="5.8" fill="#fff" stroke="#333" stroke-width="1"/></svg>
<div class="t" style="left:1838px;top:213px;font-size:13px;color:#000">XYZ</div>
<svg class="a" style="left:1822px;top:229px" width="13" height="13"><circle cx="6.5" cy="6.5" r="5.8" fill="#fff" stroke="#333" stroke-width="1"/></svg>
<div class="t" style="left:1838px;top:229px;font-size:13px;color:#000">xyz</div>
<svg class="a" style="left:1822px;top:244px" width="13" height="13"><circle cx="6.5" cy="6.5" r="5.8" fill="#0a5cc2" stroke="#0a5cc2" stroke-width="1"/><circle cx="6.5" cy="6.5" r="3" fill="#fff"/></svg>
<div class="t" style="left:1838px;top:244px;font-size:13px;color:#000">xyY</div>
<div class="a" style="left:1812px;top:262px;width:89px;height:122px;background:#858585;"></div>
<div class="a" style="left:1815px;top:264px;width:79px;height:29px;background:#ebebeb;border-right:1px solid #a8a8a8;border-bottom:1px solid #a8a8a8"></div>
<div class="t" style="left:1863px;top:273px;font-size:13.5px">Go</div>
<div class="a" style="left:1815px;top:294px;width:79px;height:29px;background:#ebebeb;border-right:1px solid #a8a8a8;border-bottom:1px solid #a8a8a8"></div>
<div class="t" style="left:1851px;top:303px;font-size:13.5px">Delete</div>
<div class="a" style="left:1815px;top:324px;width:79px;height:29px;background:#ebebeb;border-right:1px solid #a8a8a8;border-bottom:1px solid #a8a8a8"></div>
<div class="t" style="left:1858px;top:333px;font-size:13.5px">Refs</div>
<svg class="a" style="left:1818px;top:266px" width="32" height="28" viewBox="0 0 32 34" preserveAspectRatio="none"><rect x="0.4" y="1.5" width="3.2" height="26" fill="#111"/><rect x="1.2" y="2.2" width="1.6" height="1.2" fill="#fff"/><rect x="1.2" y="4.7" width="1.6" height="1.2" fill="#fff"/><rect x="1.2" y="7.2" width="1.6" height="1.2" fill="#fff"/><rect x="1.2" y="9.7" width="1.6" height="1.2" fill="#fff"/><rect x="1.2" y="12.2" width="1.6" height="1.2" fill="#fff"/><rect x="1.2" y="14.7" width="1.6" height="1.2" fill="#fff"/><rect x="1.2" y="17.2" width="1.6" height="1.2" fill="#fff"/><rect x="1.2" y="19.7" width="1.6" height="1.2" fill="#fff"/><rect x="1.2" y="22.2" width="1.6" height="1.2" fill="#fff"/><rect x="1.2" y="24.7" width="1.6" height="1.2" fill="#fff"/><rect x="28.4" y="9.5" width="3.2" height="24" fill="#111"/><rect x="29.2" y="10.2" width="1.6" height="1.2" fill="#fff"/><rect x="29.2" y="12.7" width="1.6" height="1.2" fill="#fff"/><rect x="29.2" y="15.2" width="1.6" height="1.2" fill="#fff"/><rect x="29.2" y="17.7" width="1.6" height="1.2" fill="#fff"/><rect x="29.2" y="20.2" width="1.6" height="1.2" fill="#fff"/><rect x="29.2" y="22.7" width="1.6" height="1.2" fill="#fff"/><rect x="29.2" y="25.2" width="1.6" height="1.2" fill="#fff"/><rect x="29.2" y="27.7" width="1.6" height="1.2" fill="#fff"/><rect x="29.2" y="30.2" width="1.6" height="1.2" fill="#fff"/><path d="M3.6 4H8Q11.5 6.5 12 13L12.3 22Q12.8 26.5 14.5 28H3.6Z" fill="#c4c4c4" stroke="#222" stroke-width="0.6"/><path d="M3.6 9H6.5Q8.5 9 8.5 11V12.5H6.5Q5 12.5 5 14.5V17.5Q5 19.5 6.5 19.5H8.5V21Q8.5 23 6.5 23H3.6" fill="#e4e4e4" stroke="#333" stroke-width="0.6"/><path d="M20.5 8H24Q26.5 10 28.4 11V33H22Q26 28.5 27 24.5Q23 20 21 14Z" fill="#c4c4c4" stroke="#222" stroke-width="0.6"/><path d="M28.4 14H26.5Q24.5 14 24.5 16V18.5Q24.5 20.5 26.5 20.5H28.4" fill="#e4e4e4" stroke="#333" stroke-width="0.6"/><path d="M3.5 1.5H19.5Q22 4 22 8.5L12 11.5Q11.5 5 3.5 2.5Z" fill="#e01818" stroke="#000" stroke-width="1.3" stroke-linejoin="round"/><path d="M12 11.5L22 8.5Q22.5 14.5 24 18.5L12.5 22.5Z" fill="#e01818" stroke="#000" stroke-width="1.3" stroke-linejoin="round"/><path d="M12.5 22.5L24 18.5Q26 22 30 24L23 33.5H17Q13 30.5 12.5 22.5Z" fill="#e01818" stroke="#000" stroke-width="1.3" stroke-linejoin="round"/></svg>
<svg class="a" style="left:1819px;top:296px" width="28" height="27"><defs><linearGradient id="gbin" x1="0" y1="0" x2="1" y2="0"><stop offset="0" stop-color="#e4f4fc"/><stop offset="0.6" stop-color="#9cd0f0"/><stop offset="1" stop-color="#4a90d0"/></linearGradient></defs><path d="M1 4Q14 -1 27 2L23 24Q13 28 4 23Z" fill="url(#gbin)" stroke="#6a9cc8" stroke-width="0.7"/><ellipse cx="14" cy="4" rx="12" ry="2.5" fill="#6aaee0" opacity="0.8"/><path d="M11 13A5 5 0 0 1 19 11L17.5 13.5M18 17A5 5 0 0 1 10 19L12 16.5" fill="none" stroke="#10a020" stroke-width="2.6"/></svg>
<svg class="a" style="left:1818px;top:328px" width="32" height="24"><path d="M0 10L2 9L4 6L6 3L8 5L10 7L12 6L14 8L16 8L18 2L21 1L24 3L26 5L28 7L30 8L32 9V24H0Z" fill="#ffff00"/><rect x="0" y="11" width="2.5" height="13" fill="#000080"/><rect x="2.5" y="9" width="2.5" height="15" fill="#ff00ff"/><rect x="5" y="4" width="4" height="20" fill="#0000ff"/><rect x="9" y="7" width="3" height="17" fill="#00ffff"/><rect x="12" y="9" width="4" height="15" fill="#00ff00"/><rect x="16" y="3" width="6" height="21" fill="#ffff00"/><rect x="22" y="5" width="4" height="19" fill="#800000"/><rect x="26" y="9" width="6" height="15" fill="#ff0000"/></svg>
<div class="a" style="left:1818px;top:361px;width:13px;height:13px;border:1px solid #333;border-radius:2px;background:#fff"></div>
<div class="t" style="left:1835px;top:361px;font-size:13.5px">Edit</div>
<div class="a" style="left:5px;top:386px;width:379px;height:631px;border:2px solid #999;border-top:1px solid #727272;background:#ebebeb"></div>
<div class="a" style="left:7px;top:387px;width:375px;height:17px;background:linear-gradient(#e9eff8,#e3eaf5);border-bottom:1px solid #a2a8b0;border-top-left-radius:6px;border-top-right-radius:6px"></div>
<div class="ptitle" style="left:12px;top:390px;font-size:13.5px">Selected color</div>
<div class="a" style="left:13px;top:409px;width:114px;height:14px;background:#efefef;"></div>
<div class="t" style="left:18px;top:410px;font-size:12.8px">RGB Levels</div>
<div class="a" style="left:230px;top:408px;width:128px;height:14px;background:#efefef;"></div>
<div class="t" style="left:241px;top:408px;font-size:14px">Current Measure</div>
<div class="a" style="left:14px;top:433px;width:200px;height:86px;background:#efefef;"></div>
<div class="a" style="left:14px;top:477px;width:200px;height:0;border-top:1px dashed #777"></div>
<div class="t serif b" style="left:8px;width:60px;text-align:center;top:497px;font-size:11.3px">0.0%</div>
<div class="t serif b" style="left:59px;width:60px;text-align:center;top:497px;font-size:11.3px">0.0%</div>
<div class="t serif b" style="left:110px;width:60px;text-align:center;top:497px;font-size:11.3px">0.0%</div>
<div class="t serif b" style="left:161px;width:60px;text-align:center;top:497px;font-size:11.3px">dE 0.0</div>
<svg class="a" style="left:14px;top:508px" width="200" height="12"><rect x="0" y="6" width="200" height="5" fill="#000"/><path d="M0.5 6 Q6.5 1.5 14.5 1 H36 Q44 1.5 50 6 Z" fill="#a00000" stroke="#000" stroke-width="1"/><path d="M52 6 Q58 1.5 66 1 H87 Q95 1.5 101 6 Z" fill="#00a000" stroke="#000" stroke-width="1"/><path d="M103 6 Q109 1.5 117 1 H138 Q146 1.5 152 6 Z" fill="#0000a0" stroke="#000" stroke-width="1"/><path d="M155 6 Q161 1.5 169 1 H186 Q194 1.5 200 6 Z" fill="#b8860b" stroke="#000" stroke-width="1"/></svg>
<div class="a" style="left:16px;top:533px;width:192px;height:68px;background:#efefef;"></div>
<div class="t b" style="left:35px;top:535px;font-size:13.7px">Measure</div>
<div class="t b" style="left:127px;top:535px;font-size:13.4px">Reference</div>
<div class="t" style="left:18px;top:622px;font-size:14px">Target</div>
<div class="a" style="left:50px;top:638px;width:116px;height:89px;border:1px solid #222"></div>
<svg class="a" style="left:51px;top:639px" width="114" height="87"><defs><linearGradient id="tgx" x1="0" y1="0" x2="1" y2="0"><stop offset="0" stop-color="#00ff90"/><stop offset="0.5" stop-color="#40ff00"/><stop offset="0.8" stop-color="#d0e000"/><stop offset="1" stop-color="#ffb000"/></linearGradient><linearGradient id="tgb" x1="0" y1="0" x2="1" y2="0"><stop offset="0" stop-color="#0010ff"/><stop offset="0.5" stop-color="#8000c0"/><stop offset="1" stop-color="#ff0080"/></linearGradient><linearGradient id="tgl" x1="0" y1="0" x2="0" y2="1"><stop offset="0" stop-color="#00ff90"/><stop offset="0.5" stop-color="#0090b0"/><stop offset="1" stop-color="#0010ff"/></linearGradient><linearGradient id="tgr" x1="0" y1="0" x2="0" y2="1"><stop offset="0" stop-color="#ffb000"/><stop offset="0.5" stop-color="#ff0010"/><stop offset="1" stop-color="#ff0080"/></linearGradient><filter id="tgblur"><feGaussianBlur stdDeviation="4"/></filter></defs><g filter="url(#tgblur)"><rect x="-10" y="-10" width="134" height="107" fill="#808080"/><path d="M-10 -10H124L57 43.5Z" fill="url(#tgx)"/><path d="M-10 97H124L57 43.5Z" fill="url(#tgb)"/><path d="M-10 -10V97L57 43.5Z" fill="url(#tgl)"/><path d="M124 -10V97L57 43.5Z" fill="url(#tgr)"/></g><rect x="16.5" y="12.5" width="81" height="62" rx="8" fill="#000" stroke="#fff" stroke-width="1"/><path d="M15 43.5H100M57.5 12V75" stroke="#fff" stroke-width="1" stroke-dasharray="3 2"/><ellipse cx="57.5" cy="43.5" rx="21" ry="16" fill="none" stroke="#fff" stroke-width="1" stroke-dasharray="3 3"/></svg>
<div class="a" style="left:221px;top:430px;width:152px;height:577px;background:#f0f0f0;border-top:2px solid #777;border-left:2px solid #777"></div>
<div class="a" style="left:223px;top:432px;width:53px;height:23px;background:#f0f0f0;border-bottom:1px solid #6e6e6e;border-right:2px solid #6e6e6e"></div>
<div class="a" style="left:276px;top:432px;width:79px;height:23px;background:#ffffff;border-bottom:1px solid #c6c6c6"></div>
<div class="t b" style="left:223px;width:51px;text-align:center;top:438px;font-size:12.2px">Y cd/m&sup2;</div>
<div class="a" style="left:223px;top:455px;width:53px;height:23px;background:#f0f0f0;border-bottom:1px solid #6e6e6e;border-right:2px solid #6e6e6e"></div>
<div class="a" style="left:276px;top:455px;width:79px;height:23px;background:#ffffff;border-bottom:1px solid #c6c6c6"></div>
<div class="t b" style="left:223px;width:51px;text-align:center;top:461px;font-size:12.2px">Y ftL</div>
<div class="a" style="left:223px;top:478px;width:53px;height:23px;background:#f0f0f0;border-bottom:1px solid #6e6e6e;border-right:2px solid #6e6e6e"></div>
<div class="a" style="left:276px;top:478px;width:79px;height:23px;background:#ffffff;border-bottom:1px solid #c6c6c6"></div>
<div class="t b" style="left:223px;width:51px;text-align:center;top:484px;font-size:12.2px">T&deg;</div>
<div class="a" style="left:223px;top:501px;width:53px;height:23px;background:#f0f0f0;border-bottom:1px solid #6e6e6e;border-right:2px solid #6e6e6e"></div>
<div class="a" style="left:276px;top:501px;width:79px;height:23px;background:#dddddd;border-bottom:1px solid #c6c6c6"></div>
<div class="t b" style="left:223px;width:51px;text-align:center;top:507px;font-size:12.2px">X</div>
<div class="a" style="left:223px;top:524px;width:53px;height:23px;background:#f0f0f0;border-bottom:1px solid #6e6e6e;border-right:2px solid #6e6e6e"></div>
<div class="a" style="left:276px;top:524px;width:79px;height:23px;background:#dddddd;border-bottom:1px solid #c6c6c6"></div>
<div class="t b" style="left:223px;width:51px;text-align:center;top:530px;font-size:12.2px">Y</div>
<div class="a" style="left:223px;top:547px;width:53px;height:23px;background:#f0f0f0;border-bottom:1px solid #6e6e6e;border-right:2px solid #6e6e6e"></div>
<div class="a" style="left:276px;top:547px;width:79px;height:23px;background:#dddddd;border-bottom:1px solid #c6c6c6"></div>
<div class="t b" style="left:223px;width:51px;text-align:center;top:553px;font-size:12.2px">Z</div>
<div class="a" style="left:223px;top:570px;width:53px;height:23px;background:#f0f0f0;border-bottom:1px solid #6e6e6e;border-right:2px solid #6e6e6e"></div>
<div class="a" style="left:276px;top:570px;width:79px;height:23px;background:#ffffff;border-bottom:1px solid #c6c6c6"></div>
<div class="t b" style="left:223px;width:51px;text-align:center;top:576px;font-size:12.2px">R</div>
<div class="a" style="left:223px;top:593px;width:53px;height:23px;background:#f0f0f0;border-bottom:1px solid #6e6e6e;border-right:2px solid #6e6e6e"></div>
<div class="a" style="left:276px;top:593px;width:79px;height:23px;background:#ffffff;border-bottom:1px solid #c6c6c6"></div>
<div class="t b" style="left:223px;width:51px;text-align:center;top:599px;font-size:12.2px">G</div>
<div class="a" style="left:223px;top:616px;width:53px;height:23px;background:#f0f0f0;border-bottom:1px solid #6e6e6e;border-right:2px solid #6e6e6e"></div>
<div class="a" style="left:276px;top:616px;width:79px;height:23px;background:#ffffff;border-bottom:1px solid #c6c6c6"></div>
<div class="t b" style="left:223px;width:51px;text-align:center;top:622px;font-size:12.2px">B</div>
<div class="a" style="left:223px;top:639px;width:53px;height:23px;background:#f0f0f0;border-bottom:1px solid #6e6e6e;border-right:2px solid #6e6e6e"></div>
<div class="a" style="left:276px;top:639px;width:79px;height:23px;background:#dddddd;border-bottom:1px solid #c6c6c6"></div>
<div class="t b" style="left:223px;width:51px;text-align:center;top:645px;font-size:12.2px">x</div>
<div class="a" style="left:223px;top:662px;width:53px;height:23px;background:#f0f0f0;border-bottom:1px solid #6e6e6e;border-right:2px solid #6e6e6e"></div>
<div class="a" style="left:276px;top:662px;width:79px;height:23px;background:#dddddd;border-bottom:1px solid #c6c6c6"></div>
<div class="t b" style="left:223px;width:51px;text-align:center;top:668px;font-size:12.2px">y</div>
<div class="a" style="left:223px;top:685px;width:53px;height:23px;background:#f0f0f0;border-bottom:1px solid #6e6e6e;border-right:2px solid #6e6e6e"></div>
<div class="a" style="left:276px;top:685px;width:79px;height:23px;background:#dddddd;border-bottom:1px solid #c6c6c6"></div>
<div class="t b" style="left:223px;width:51px;text-align:center;top:691px;font-size:12.2px">Y</div>
<div class="a" style="left:223px;top:708px;width:53px;height:23px;background:#f0f0f0;border-bottom:1px solid #6e6e6e;border-right:2px solid #6e6e6e"></div>
<div class="a" style="left:276px;top:708px;width:79px;height:23px;background:#ffffff;border-bottom:1px solid #c6c6c6"></div>
<div class="t b" style="left:223px;width:51px;text-align:center;top:714px;font-size:12.2px">x</div>
<div class="a" style="left:223px;top:731px;width:53px;height:23px;background:#f0f0f0;border-bottom:1px solid #6e6e6e;border-right:2px solid #6e6e6e"></div>
<div class="a" style="left:276px;top:731px;width:79px;height:23px;background:#ffffff;border-bottom:1px solid #c6c6c6"></div>
<div class="t b" style="left:223px;width:51px;text-align:center;top:737px;font-size:12.2px">y</div>
<div class="a" style="left:223px;top:754px;width:53px;height:23px;background:#f0f0f0;border-bottom:1px solid #6e6e6e;border-right:2px solid #6e6e6e"></div>
<div class="a" style="left:276px;top:754px;width:79px;height:23px;background:#ffffff;border-bottom:1px solid #c6c6c6"></div>
<div class="t b" style="left:223px;width:51px;text-align:center;top:760px;font-size:12.2px">z</div>
<div class="a" style="left:223px;top:777px;width:53px;height:23px;background:#f0f0f0;border-bottom:1px solid #6e6e6e;border-right:2px solid #6e6e6e"></div>
<div class="a" style="left:276px;top:777px;width:79px;height:23px;background:#dddddd;border-bottom:1px solid #c6c6c6"></div>
<div class="t b" style="left:223px;width:51px;text-align:center;top:783px;font-size:12.2px">L</div>
<div class="a" style="left:223px;top:800px;width:53px;height:23px;background:#f0f0f0;border-bottom:1px solid #6e6e6e;border-right:2px solid #6e6e6e"></div>
<div class="a" style="left:276px;top:800px;width:79px;height:23px;background:#dddddd;border-bottom:1px solid #c6c6c6"></div>
<div class="t b" style="left:223px;width:51px;text-align:center;top:806px;font-size:12.2px">a</div>
<div class="a" style="left:223px;top:823px;width:53px;height:23px;background:#f0f0f0;border-bottom:1px solid #6e6e6e;border-right:2px solid #6e6e6e"></div>
<div class="a" style="left:276px;top:823px;width:79px;height:23px;background:#dddddd;border-bottom:1px solid #c6c6c6"></div>
<div class="t b" style="left:223px;width:51px;text-align:center;top:829px;font-size:12.2px">b</div>
<div class="a" style="left:223px;top:846px;width:53px;height:23px;background:#f0f0f0;border-bottom:1px solid #6e6e6e;border-right:2px solid #6e6e6e"></div>
<div class="a" style="left:276px;top:846px;width:79px;height:23px;background:#ffffff;border-bottom:1px solid #c6c6c6"></div>
<div class="t b" style="left:223px;width:51px;text-align:center;top:852px;font-size:12.2px">L</div>
<div class="a" style="left:223px;top:869px;width:53px;height:23px;background:#f0f0f0;border-bottom:1px solid #6e6e6e;border-right:2px solid #6e6e6e"></div>
<div class="a" style="left:276px;top:869px;width:79px;height:23px;background:#ffffff;border-bottom:1px solid #c6c6c6"></div>
<div class="t b" style="left:223px;width:51px;text-align:center;top:875px;font-size:12.2px">C</div>
<div class="a" style="left:223px;top:892px;width:53px;height:23px;background:#f0f0f0;border-bottom:1px solid #6e6e6e;border-right:2px solid #6e6e6e"></div>
<div class="a" style="left:276px;top:892px;width:79px;height:23px;background:#ffffff;border-bottom:1px solid #c6c6c6"></div>
<div class="t b" style="left:223px;width:51px;text-align:center;top:898px;font-size:12.2px">H</div>
<div class="a" style="left:223px;top:915px;width:53px;height:23px;background:#f0f0f0;border-bottom:1px solid #6e6e6e;border-right:2px solid #6e6e6e"></div>
<div class="a" style="left:276px;top:915px;width:79px;height:23px;background:#dddddd;border-bottom:1px solid #c6c6c6"></div>
<div class="t b" style="left:223px;width:51px;text-align:center;top:921px;font-size:12.2px">L</div>
<div class="a" style="left:223px;top:938px;width:53px;height:23px;background:#f0f0f0;border-bottom:1px solid #6e6e6e;border-right:2px solid #6e6e6e"></div>
<div class="a" style="left:276px;top:938px;width:79px;height:23px;background:#dddddd;border-bottom:1px solid #c6c6c6"></div>
<div class="t b" style="left:223px;width:51px;text-align:center;top:944px;font-size:12.2px">M</div>
<div class="a" style="left:223px;top:961px;width:53px;height:23px;background:#f0f0f0;border-bottom:1px solid #6e6e6e;border-right:2px solid #6e6e6e"></div>
<div class="a" style="left:276px;top:961px;width:79px;height:23px;background:#dddddd;border-bottom:1px solid #c6c6c6"></div>
<div class="t b" style="left:223px;width:51px;text-align:center;top:967px;font-size:12.2px">S</div>
<div class="a" style="left:223px;top:984px;width:132px;height:23px;background:#a0a0a0;"></div>
<svg class="a" style="left:359px;top:437px" width="11" height="7"><path d="M0.5 6.5L5.5 0.5L10.5 6.5Z" fill="#a8a8a8"/></svg>
<svg class="a" style="left:359px;top:995px" width="11" height="7"><path d="M0.5 0.5L5.5 6.5L10.5 0.5Z" fill="#a8a8a8"/></svg>
<div class="a" style="left:391px;top:386px;width:1504px;height:631px;border:2px solid #999;border-top:1px solid #727272;background:#ebebeb"></div>
<div class="a" style="left:393px;top:387px;width:1500px;height:17px;background:linear-gradient(#e9eff8,#e3eaf5);border-bottom:1px solid #a2a8b0;border-top-left-radius:6px;border-top-right-radius:6px"></div>
<div class="ptitle" style="left:398px;top:390px;font-size:13.8px">Information</div>
<div class="a" style="left:399px;top:412px;width:301px;height:22px;background:#fff;border:1px solid #c8c8c8"></div>
<div class="t" style="left:403px;top:416px;font-size:13.6px">Luminance - Gamma</div>
<svg class="a" style="left:686px;top:420px" width="10" height="6"><path d="M0.5 0.5L5 5L9.5 0.5" fill="none" stroke="#444" stroke-width="1.1"/></svg>
<div class="a" style="left:398px;top:439px;width:748px;height:569px;border-top:2px solid #6a6a6a;border-left:2px solid #6a6a6a;border-right:2px solid #fff;border-bottom:2px solid #fff"></div>
<div class="a" style="left:400px;top:441px;width:744px;height:565px;border-top:1px solid #a0a0a0;border-left:2px solid #a0a0a0;border-right:2px solid #e6e6e6;border-bottom:1px solid #e6e6e6"></div>
<div class="a" style="left:1146px;top:439px;width:748px;height:569px;border-top:2px solid #6a6a6a;border-left:2px solid #6a6a6a;border-right:2px solid #fff;border-bottom:2px solid #fff"></div>
<div class="a" style="left:1148px;top:441px;width:744px;height:565px;border-top:1px solid #a0a0a0;border-left:2px solid #a0a0a0;border-right:2px solid #e6e6e6;border-bottom:1px solid #e6e6e6"></div>
<svg class="a" style="left:402px;top:442px" width="740" height="563"><defs><linearGradient id="glum" x1="0" y1="0" x2="1" y2="0"><stop offset="0" stop-color="#212121"/><stop offset="1" stop-color="#fbfbfb"/></linearGradient></defs><rect x="0" y="0" width="740" height="563" fill="url(#glum)"/><rect x="0" y="0" width="1" height="563" fill="#064444"/><rect x="74" y="0" width="1" height="563" fill="#064444"/><rect x="148" y="0" width="1" height="563" fill="#064444"/><rect x="222" y="0" width="1" height="563" fill="#064444"/><rect x="296" y="0" width="1" height="563" fill="#064444"/><rect x="370" y="0" width="1" height="563" fill="#064444"/><rect x="444" y="0" width="1" height="563" fill="#064444"/><rect x="518" y="0" width="1" height="563" fill="#064444"/><rect x="592" y="0" width="1" height="563" fill="#064444"/><rect x="666" y="0" width="1" height="563" fill="#064444"/><rect x="0" y="71" width="740" height="1" fill="#064444"/><rect x="0" y="141" width="740" height="1" fill="#064444"/><rect x="0" y="211" width="740" height="1" fill="#064444"/><rect x="0" y="281" width="740" height="1" fill="#064444"/><rect x="0" y="351" width="740" height="1" fill="#064444"/><rect x="0" y="421" width="740" height="1" fill="#064444"/><rect x="0" y="491" width="740" height="1" fill="#064444"/></svg>
<div class="t serif" style="left:404px;top:499px;font-size:13.8px;color:#e0e0e0">140 cd m-2</div>
<div class="t serif" style="left:404px;top:569px;font-size:13.8px;color:#e0e0e0">120 cd m-2</div>
<div class="t serif" style="left:404px;top:639px;font-size:13.8px;color:#e0e0e0">100 cd m-2</div>
<div class="t serif" style="left:404px;top:709px;font-size:13.8px;color:#e0e0e0">80 cd m-2</div>
<div class="t serif" style="left:404px;top:779px;font-size:13.8px;color:#e0e0e0">60 cd m-2</div>
<div class="t serif" style="left:404px;top:849px;font-size:13.8px;color:#e0e0e0">40 cd m-2</div>
<div class="t serif" style="left:404px;top:919px;font-size:13.8px;color:#e0e0e0">20 cd m-2</div>
<div class="t serif" style="left:478px;top:990px;font-size:13.8px;color:rgb(229,229,229)">10% White</div>
<div class="t serif" style="left:552px;top:990px;font-size:13.8px;color:rgb(204,204,204)">20% White</div>
<div class="t serif" style="left:626px;top:990px;font-size:13.8px;color:rgb(178,178,178)">30% White</div>
<div class="t serif" style="left:700px;top:990px;font-size:13.8px;color:rgb(153,153,153)">40% White</div>
<div class="t serif" style="left:774px;top:990px;font-size:13.8px;color:rgb(127,127,127)">50% White</div>
<div class="t serif" style="left:848px;top:990px;font-size:13.8px;color:rgb(102,102,102)">60% White</div>
<div class="t serif" style="left:922px;top:990px;font-size:13.8px;color:rgb(76,76,76)">70% White</div>
<div class="t serif" style="left:996px;top:990px;font-size:13.8px;color:rgb(50,50,50)">80% White</div>
<div class="t serif" style="left:1070px;top:990px;font-size:13.8px;color:rgb(25,25,25)">90% White</div>
<div class="t b" style="left:709px;top:444px;font-size:14.7px;color:#dcdc00">Luminance Response</div>
<div class="t b" style="left:977px;top:949px;font-size:16px;color:#8c8c8c">hcfr.sourceforge.net</div>
<svg class="a" style="left:402px;top:442px" width="740" height="563"><path d="M0 562 L70 559 L145 547 L219 523.5 L292.70000000000005 489.6 L368 442.5 L442 383 L516 310 L591 223 L664.5 121 L740 8" fill="none" stroke="#ffff00" stroke-width="2"/><rect x="-4" y="558" width="8" height="8" fill="#e4e4e4"/><rect x="66" y="555" width="8" height="8" fill="#e4e4e4"/><rect x="141" y="543" width="8" height="8" fill="#e4e4e4"/><rect x="215" y="519.5" width="8" height="8" fill="#e4e4e4"/><rect x="288.70000000000005" y="485.6" width="8" height="8" fill="#e4e4e4"/><rect x="364" y="438.5" width="8" height="8" fill="#e4e4e4"/><rect x="438" y="379" width="8" height="8" fill="#e4e4e4"/><rect x="512" y="306" width="8" height="8" fill="#e4e4e4"/><rect x="587" y="219" width="8" height="8" fill="#e4e4e4"/><rect x="660.5" y="117" width="8" height="8" fill="#e4e4e4"/><rect x="736" y="4" width="8" height="8" fill="#e4e4e4"/></svg>
<svg class="a" style="left:1150px;top:442px" width="740" height="563"><defs><linearGradient id="ggam" x1="0" y1="0" x2="1" y2="0"><stop offset="0" stop-color="#212121"/><stop offset="1" stop-color="#fbfbfb"/></linearGradient></defs><rect x="0" y="0" width="740" height="563" fill="url(#ggam)"/><rect x="0" y="0" width="1" height="563" fill="#064444"/><rect x="74" y="0" width="1" height="563" fill="#064444"/><rect x="148" y="0" width="1" height="563" fill="#064444"/><rect x="222" y="0" width="1" height="563" fill="#064444"/><rect x="296" y="0" width="1" height="563" fill="#064444"/><rect x="370" y="0" width="1" height="563" fill="#064444"/><rect x="444" y="0" width="1" height="563" fill="#064444"/><rect x="518" y="0" width="1" height="563" fill="#064444"/><rect x="592" y="0" width="1" height="563" fill="#064444"/><rect x="666" y="0" width="1" height="563" fill="#064444"/><rect x="0" y="29" width="740" height="1" fill="#064444"/><rect x="0" y="57" width="740" height="1" fill="#064444"/><rect x="0" y="85" width="740" height="1" fill="#064444"/><rect x="0" y="113" width="740" height="1" fill="#064444"/><rect x="0" y="141" width="740" height="1" fill="#064444"/><rect x="0" y="169" width="740" height="1" fill="#064444"/><rect x="0" y="197" width="740" height="1" fill="#064444"/><rect x="0" y="225" width="740" height="1" fill="#064444"/><rect x="0" y="253" width="740" height="1" fill="#064444"/><rect x="0" y="281" width="740" height="1" fill="#064444"/><rect x="0" y="310" width="740" height="1" fill="#064444"/><rect x="0" y="338" width="740" height="1" fill="#064444"/><rect x="0" y="366" width="740" height="1" fill="#064444"/><rect x="0" y="394" width="740" height="1" fill="#064444"/><rect x="0" y="422" width="740" height="1" fill="#064444"/><rect x="0" y="450" width="740" height="1" fill="#064444"/><rect x="0" y="478" width="740" height="1" fill="#064444"/><rect x="0" y="506" width="740" height="1" fill="#064444"/><rect x="0" y="534" width="740" height="1" fill="#064444"/></svg>
<div class="t serif" style="left:1152px;top:457px;font-size:13.8px;color:#e0e0e0">2.9</div>
<div class="t serif" style="left:1152px;top:485px;font-size:13.8px;color:#e0e0e0">2.8</div>
<div class="t serif" style="left:1152px;top:513px;font-size:13.8px;color:#e0e0e0">2.7</div>
<div class="t serif" style="left:1152px;top:541px;font-size:13.8px;color:#e0e0e0">2.6</div>
<div class="t serif" style="left:1152px;top:569px;font-size:13.8px;color:#e0e0e0">2.5</div>
<div class="t serif" style="left:1152px;top:597px;font-size:13.8px;color:#e0e0e0">2.4</div>
<div class="t serif" style="left:1152px;top:625px;font-size:13.8px;color:#e0e0e0">2.3</div>
<div class="t serif" style="left:1152px;top:653px;font-size:13.8px;color:#e0e0e0">2.2</div>
<div class="t serif" style="left:1152px;top:681px;font-size:13.8px;color:#e0e0e0">2.1</div>
<div class="t serif" style="left:1152px;top:709px;font-size:13.8px;color:#e0e0e0">2</div>
<div class="t serif" style="left:1152px;top:738px;font-size:13.8px;color:#e0e0e0">1.9</div>
<div class="t serif" style="left:1152px;top:766px;font-size:13.8px;color:#e0e0e0">1.8</div>
<div class="t serif" style="left:1152px;top:794px;font-size:13.8px;color:#e0e0e0">1.7</div>
<div class="t serif" style="left:1152px;top:822px;font-size:13.8px;color:#e0e0e0">1.6</div>
<div class="t serif" style="left:1152px;top:850px;font-size:13.8px;color:#e0e0e0">1.5</div>
<div class="t serif" style="left:1152px;top:878px;font-size:13.8px;color:#e0e0e0">1.4</div>
<div class="t serif" style="left:1152px;top:906px;font-size:13.8px;color:#e0e0e0">1.3</div>
<div class="t serif" style="left:1152px;top:934px;font-size:13.8px;color:#e0e0e0">1.2</div>
<div class="t serif" style="left:1152px;top:962px;font-size:13.8px;color:#e0e0e0">1.1</div>
<div class="t serif" style="left:1226px;top:990px;font-size:13.8px;color:rgb(229,229,229)">10% White</div>
<div class="t serif" style="left:1300px;top:990px;font-size:13.8px;color:rgb(204,204,204)">20% White</div>
<div class="t serif" style="left:1374px;top:990px;font-size:13.8px;color:rgb(178,178,178)">30% White</div>
<div class="t serif" style="left:1448px;top:990px;font-size:13.8px;color:rgb(153,153,153)">40% White</div>
<div class="t serif" style="left:1522px;top:990px;font-size:13.8px;color:rgb(127,127,127)">50% White</div>
<div class="t serif" style="left:1596px;top:990px;font-size:13.8px;color:rgb(102,102,102)">60% White</div>
<div class="t serif" style="left:1670px;top:990px;font-size:13.8px;color:rgb(76,76,76)">70% White</div>
<div class="t serif" style="left:1744px;top:990px;font-size:13.8px;color:rgb(50,50,50)">80% White</div>
<div class="t serif" style="left:1818px;top:990px;font-size:13.8px;color:rgb(25,25,25)">90% White</div>
<div class="t b" style="left:1481px;top:444px;font-size:14.66px;color:#dcdc00">EOTF(Gamma)</div>
<div class="t b" style="left:1725px;top:949px;font-size:16px;color:#8c8c8c">hcfr.sourceforge.net</div>
<svg class="a" style="left:1150px;top:442px" width="740" height="563"><path d="M76 225.5H665" stroke="#fff" stroke-width="1" stroke-dasharray="3 3"/><path d="M70 238 L145 246 L219 232.20000000000005 L292.4000000000001 229.70000000000005 L367.79999999999995 226.89999999999998 L441.5 231 L515.4000000000001 232 L590.8 234 L664.5 248.79999999999995" fill="none" stroke="#ffff00" stroke-width="2"/><rect x="66" y="234" width="8" height="8" fill="#ffff00"/><rect x="141" y="242" width="8" height="8" fill="#ffff00"/><rect x="215" y="228.20000000000005" width="8" height="8" fill="#ffff00"/><rect x="288.4000000000001" y="225.70000000000005" width="8" height="8" fill="#ffff00"/><rect x="363.79999999999995" y="222.89999999999998" width="8" height="8" fill="#ffff00"/><rect x="437.5" y="227" width="8" height="8" fill="#ffff00"/><rect x="511.4000000000001" y="228" width="8" height="8" fill="#ffff00"/><rect x="586.8" y="230" width="8" height="8" fill="#ffff00"/><rect x="660.5" y="244.79999999999995" width="8" height="8" fill="#ffff00"/><rect x="66" y="221" width="8" height="8" fill="#e4e4e4"/><rect x="141" y="221" width="8" height="8" fill="#e4e4e4"/><rect x="215" y="221" width="8" height="8" fill="#e4e4e4"/><rect x="288.4000000000001" y="221" width="8" height="8" fill="#e4e4e4"/><rect x="363.79999999999995" y="221" width="8" height="8" fill="#e4e4e4"/><rect x="437.5" y="221" width="8" height="8" fill="#e4e4e4"/><rect x="511.4000000000001" y="221" width="8" height="8" fill="#e4e4e4"/><rect x="586.8" y="221" width="8" height="8" fill="#e4e4e4"/><rect x="660.5" y="221" width="8" height="8" fill="#e4e4e4"/></svg>
<div class="a" style="left:0px;top:1042px;width:1920px;height:20px;background:#f0f0f0;"></div>
<div class="a" style="left:0px;top:1042px;width:54px;height:19px;background:#f0f0f0;border:1px solid #111;border-bottom-width:2px;border-right-width:2px"></div>
<div class="a" style="left:17px;top:1043px;width:1px;height:17px;background:#777;"></div>
<div class="a" style="left:34px;top:1043px;width:1px;height:17px;background:#777;"></div>
<svg class="a" style="left:5px;top:1047px" width="10" height="10"><path d="M1 1L9 9M9 1L1 9" stroke="#000" stroke-width="1.3"/></svg>
<svg class="a" style="left:23px;top:1047px" width="5" height="9"><path d="M4.5 0V9L0 4.5Z" fill="#000"/></svg>
<svg class="a" style="left:41px;top:1047px" width="5" height="9"><path d="M0 0V9L4.5 4.5Z" fill="#000"/></svg>
<div class="a" style="left:320px;top:1042px;width:1600px;height:1px;background:#111;"></div>
<svg class="a" style="left:54px;top:1042px" width="270" height="20"><path d="M1 0.5L9 18.3H65.2L73.2 0.5Z" fill="#fff"/><path d="M73 0.5H267.5M1 0.5L9 18.3H65.2L73.2 0.6M68.6 11L72.6 18.3H133.3L136.8 11L132.7 0.6M136.8 11L140.8 18.3H185.4L188.9 11L185.4 0.6M188.9 11L192.9 18.3H258.7L267.3 0.6" fill="none" stroke="#111" stroke-width="1.1"/></svg>
<div class="t b" style="left:67px;top:1046px;font-size:10.7px">Measures</div>
<div class="t" style="left:134px;top:1047px;font-size:9.2px;color:#222">Luminance</div>
<div class="t" style="left:200px;top:1047px;font-size:9.2px;color:#222">Gamma</div>
<div class="t" style="left:255px;top:1047px;font-size:9.2px;color:#222">RGB Levels</div>
<svg class="a" style="left:1751px;top:1044px" width="15" height="15"><rect x="1" y="1" width="13" height="10" rx="1" fill="#7a7a00" stroke="#222" stroke-width="0.8"/><path d="M3 5L8 3L9 7L5 8Z" fill="#e01818"/><circle cx="4" cy="12" r="2.5" fill="#333"/><circle cx="10" cy="12" r="2.5" fill="#f0f000" stroke="#222" stroke-width="0.5"/></svg>
<div class="a" style="left:1846px;top:1044px;width:13px;height:13px;border:1px solid #333;border-radius:2px;background:#fff"></div>
<div class="t" style="left:1862px;top:1046px;font-size:10.7px">Reference</div>
<div class="a" style="left:0px;top:1062px;width:1920px;height:18px;background:#edf2fa;"></div>
<div class="t" style="left:2px;top:1065px;font-size:11px">Ready</div>
<div class="a" style="left:1742px;top:1062px;width:75px;height:18px;background:#eef2fa;border-top:1px solid #9ab4d6;border-left:1px solid #9ab4d6"></div>
<div class="a" style="left:1820px;top:1062px;width:28px;height:18px;background:#eef2fa;border-top:1px solid #9ab4d6;border-left:1px solid #9ab4d6"></div>
<div class="a" style="left:1851px;top:1062px;width:33px;height:18px;background:#eef2fa;border-top:1px solid #9ab4d6;border-left:1px solid #9ab4d6"></div>
<div class="a" style="left:1887px;top:1062px;width:33px;height:18px;background:#eef2fa;border-top:1px solid #9ab4d6;border-left:1px solid #9ab4d6"></div>
<div class="t" style="left:1853px;top:1066px;font-size:11.8px">NUM</div>
</body></html>
